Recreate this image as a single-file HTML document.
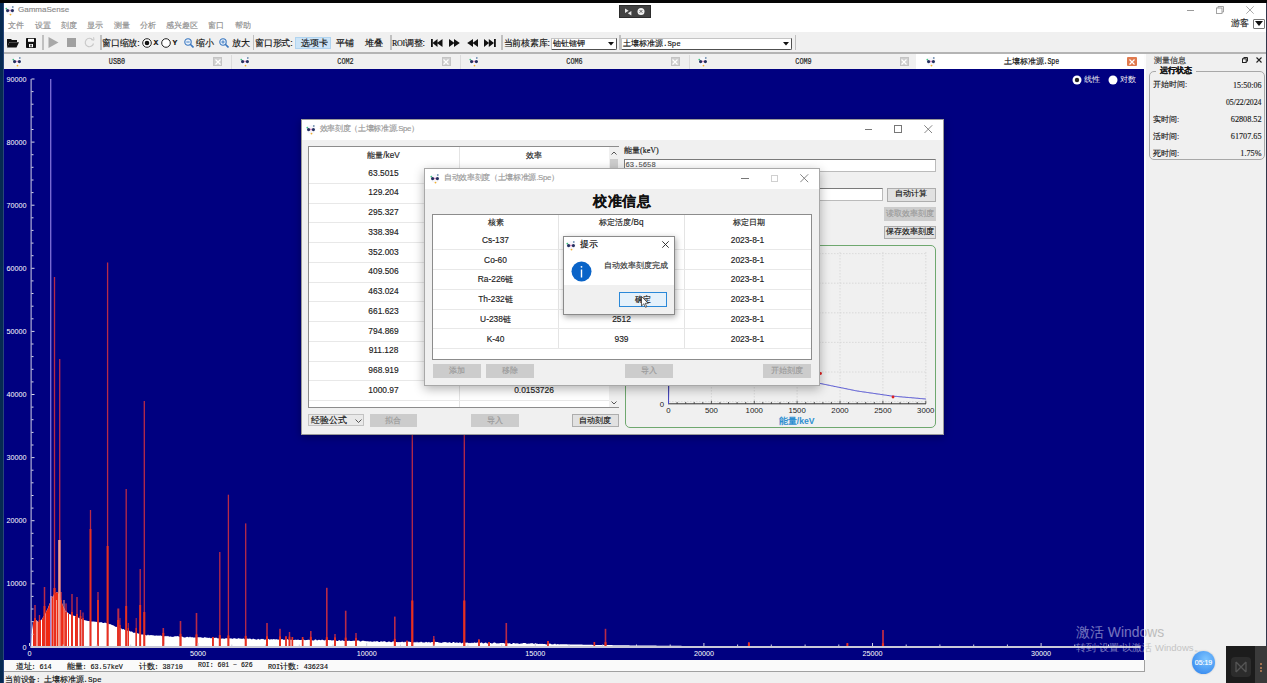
<!DOCTYPE html>
<html><head><meta charset="utf-8">
<style>
*{margin:0;padding:0;box-sizing:border-box}
html,body{width:1267px;height:683px;overflow:hidden;background:#f0f0f0;font-family:"Liberation Sans",sans-serif;color:#222;position:relative}
.a{position:absolute}
.t{position:absolute;white-space:nowrap;line-height:1;-webkit-text-stroke:0.15px currentColor}
.m{font-family:"Liberation Mono",monospace}
.s{font-family:"Liberation Serif",serif}
</style></head><body>
<div class="a" style="left:0;top:0;width:1267px;height:3px;background:#050505"></div>
<div class="a" style="left:3px;top:3px;width:1263px;height:29px;background:#fff"></div>
<div class="a" style="left:3px;top:32px;width:1263px;height:20px;background:#f0f0f0"></div>
<div class="a" style="left:3px;top:52px;width:1263px;height:2px;background:#b4b4b4"></div>
<div class="a" style="left:3px;top:54px;width:1142px;height:15px;background:#f0f0f0"></div>
<div class="a" style="left:3px;top:69px;width:1141px;height:591px;background:#000080"></div>
<div class="a" style="left:3px;top:660px;width:1142px;height:11px;background:#fafafa"></div>
<div class="a" style="left:1144px;top:660px;width:1px;height:12px;background:#a0a0a0"></div>
<div class="a" style="left:3px;top:671px;width:1142px;height:1px;background:#a0a0a0"></div>
<div class="a" style="left:1144px;top:54px;width:2px;height:606px;background:#fcfcfc"></div>
<div class="a" style="left:1146px;top:54px;width:120px;height:629px;background:#f0f0f0"></div>
<div class="a" style="left:0;top:3px;width:3px;height:680px;background:#062a52"></div><div class="a" style="left:3px;top:3px;width:1px;height:680px;background:#28467a"></div>
<div class="a" style="left:1266px;top:3px;width:1px;height:680px;background:#30364a"></div>
<svg class="a" style="left:5px;top:5px" width="10" height="11" viewBox="0 0 10 11"><circle cx="5" cy="5.5" r="4.6" fill="#f7f7fb"/><circle cx="1.3" cy="3.6" r="0.9" fill="#40c080"/><circle cx="7.8" cy="2" r="0.9" fill="#7090b0"/><circle cx="5" cy="5.5" r="1.1" fill="#e8a0d0"/><circle cx="2.6" cy="5.6" r="1.6" fill="#243060"/><circle cx="7.4" cy="5.6" r="1.6" fill="#243060"/><circle cx="5.5" cy="9.6" r="0.9" fill="#f0b030"/></svg>
<div class="t" style="left:18px;top:6px;font-size:8px;color:#8a8a8a">GammaSense</div>
<div class="t" style="left:8px;top:22px;font-size:8px;color:#8e8e8e;word-spacing:0">文件</div>
<div class="t" style="left:35px;top:22px;font-size:8px;color:#8e8e8e">设置</div>
<div class="t" style="left:60.5px;top:22px;font-size:8px;color:#8e8e8e">刻度</div>
<div class="t" style="left:87px;top:22px;font-size:8px;color:#8e8e8e">显示</div>
<div class="t" style="left:113.5px;top:22px;font-size:8px;color:#8e8e8e">测量</div>
<div class="t" style="left:140px;top:22px;font-size:8px;color:#8e8e8e">分析</div>
<div class="t" style="left:166px;top:22px;font-size:8px;color:#8e8e8e">感兴趣区</div>
<div class="t" style="left:208px;top:22px;font-size:8px;color:#8e8e8e">窗口</div>
<div class="t" style="left:234.5px;top:22px;font-size:8px;color:#8e8e8e">帮助</div>
<!-- recording pill -->
<div class="a" style="left:618.5px;top:5px;width:32px;height:13px;background:#424242;border:1px solid #2c2c2c"></div>
<svg class="a" style="left:624px;top:7px" width="24" height="10" viewBox="0 0 24 10"><path d="M1 1.5 L4.6 3.8 L1 6 Z" fill="#e8e8e8"/><path d="M7.4 4 L7.4 8.4 L3.8 6.2 Z" fill="#e8e8e8"/><circle cx="17" cy="4.4" r="3.5" fill="#f2f2f2"/><path d="M15.6 3 L18.4 5.8 M18.4 3 L15.6 5.8" stroke="#555" stroke-width="0.9"/></svg>
<!-- window controls -->
<div class="a" style="left:1187px;top:10px;width:7px;height:1px;background:#9a9a9a"></div>
<svg class="a" style="left:1215.5px;top:5.5px" width="8" height="8" viewBox="0 0 8 8"><rect x="0.5" y="2" width="5.5" height="5.5" fill="none" stroke="#9a9a9a" stroke-width="0.9"/><path d="M2 2 V0.5 H7.5 V6 H6" fill="none" stroke="#9a9a9a" stroke-width="0.9"/></svg>
<svg class="a" style="left:1246px;top:5.5px" width="8" height="8" viewBox="0 0 8 8"><path d="M0.3 0.3 L7.7 7.7 M7.7 0.3 L0.3 7.7" stroke="#a0a0a0" stroke-width="0.9"/></svg>
<div class="t" style="left:1231px;top:19px;font-size:9px;color:#222">游客</div>
<div class="a" style="left:1253px;top:19px;width:12px;height:9.5px;border:1px solid #777;background:#fff;border-radius:1px"></div>
<svg class="a" style="left:1255px;top:21.3px" width="8" height="5" viewBox="0 0 8 5"><path d="M0 0 H8 L4 5 Z" fill="#111"/></svg>
<!-- open folder -->
<svg class="a" style="left:7px;top:38px" width="12" height="10" viewBox="0 0 12 10"><path d="M0 1 H4 L5 2 H10 V4 H2.5 L0 9.5 Z" fill="#111"/><path d="M2.5 4.2 H12 L9.5 9.5 H0 Z" fill="#111"/></svg>
<!-- save -->
<svg class="a" style="left:25.5px;top:37.5px" width="10" height="10" viewBox="0 0 10 10"><rect x="0" y="0" width="10" height="10" rx="0.8" fill="#111"/><rect x="2" y="0.8" width="6" height="3" fill="#fff"/><rect x="3" y="6" width="4" height="3.2" fill="#fff"/><rect x="4.3" y="6.6" width="1.4" height="2" fill="#111"/></svg>
<div class="a" style="left:42px;top:35px;width:1.5px;height:15px;background:#c0c0c0"></div>
<!-- play -->
<svg class="a" style="left:48px;top:37px" width="11" height="11" viewBox="0 0 11 11"><path d="M0.5 0 L10.5 5.5 L0.5 11 Z" fill="#a8a8a8"/></svg>
<div class="a" style="left:67px;top:38px;width:9px;height:9px;background:#a0a0a0"></div>
<svg class="a" style="left:84px;top:37px" width="11" height="11" viewBox="0 0 11 11"><path d="M8.8 3 A4.2 4.2 0 1 0 9.5 6.5" fill="none" stroke="#c8c8c8" stroke-width="1.1"/><path d="M7 2.6 L10 3.2 L9.6 0.2" fill="none" stroke="#c8c8c8" stroke-width="1"/></svg>
<div class="a" style="left:100px;top:35px;width:1.5px;height:15px;background:#c0c0c0"></div>
<div class="t" style="left:102px;top:38.5px;font-size:8.6px;color:#111;letter-spacing:-0.2px">窗口缩放:</div>
<svg class="a" style="left:141.5px;top:38px" width="10" height="10" viewBox="0 0 10 10"><circle cx="5" cy="5" r="4.3" fill="#fff" stroke="#222" stroke-width="1"/><circle cx="5" cy="5" r="2.3" fill="#111"/></svg>
<div class="t m" style="left:153.5px;top:39px;font-size:8px;color:#111;font-weight:bold">X</div>
<svg class="a" style="left:160.5px;top:38px" width="10" height="10" viewBox="0 0 10 10"><circle cx="5" cy="5" r="4.3" fill="#fff" stroke="#222" stroke-width="1"/></svg>
<div class="t m" style="left:172.5px;top:39px;font-size:8px;color:#111;font-weight:bold">Y</div>
<svg class="a" style="left:184px;top:37.5px" width="10" height="10" viewBox="0 0 10 10"><circle cx="4" cy="4" r="3.2" fill="#e8f0fa" stroke="#3b78c0" stroke-width="1.1"/><path d="M6.3 6.3 L9.5 9.5" stroke="#3b78c0" stroke-width="1.6"/><path d="M2.3 4 H5.7" stroke="#3b78c0" stroke-width="0.9"/></svg>
<div class="t" style="left:196px;top:38.5px;font-size:8.5px;color:#111">缩小</div>
<svg class="a" style="left:218.5px;top:37.5px" width="10" height="10" viewBox="0 0 10 10"><circle cx="4" cy="4" r="3.2" fill="#e8f0fa" stroke="#3b78c0" stroke-width="1.1"/><path d="M6.3 6.3 L9.5 9.5" stroke="#3b78c0" stroke-width="1.6"/><path d="M2.3 4 H5.7 M4 2.3 V5.7" stroke="#3b78c0" stroke-width="0.9"/></svg>
<div class="t" style="left:231.5px;top:38.5px;font-size:8.5px;color:#111">放大</div>
<div class="a" style="left:252.5px;top:35px;width:1.5px;height:15px;background:#c0c0c0"></div>
<div class="t" style="left:255px;top:38.5px;font-size:8.6px;color:#111;letter-spacing:-0.2px">窗口形式:</div>
<div class="a" style="left:295px;top:37px;width:36px;height:12px;background:#cce4f7;border:1px solid #b0d4f0"></div>
<div class="t" style="left:300.5px;top:38.5px;font-size:8.5px;color:#111">选项卡</div>
<div class="t" style="left:336px;top:38.5px;font-size:8.5px;color:#111">平铺</div>
<div class="t" style="left:365px;top:38.5px;font-size:8.5px;color:#111">堆叠</div>
<div class="a" style="left:390px;top:35px;width:1.5px;height:15px;background:#c0c0c0"></div>
<div class="t" style="left:392px;top:38.5px;font-size:8.6px;color:#111;letter-spacing:-0.2px"><span class="s" style="font-size:8px;letter-spacing:-0.3px">ROI</span>调整:</div>
<svg class="a" style="left:430.5px;top:38.5px" width="12" height="8" viewBox="0 0 12 8"><rect x="0" y="0" width="1.8" height="8" fill="#111"/><path d="M1.5 4 L6.5 0 V8 Z M6 4 L11.5 0 V8 Z" fill="#111"/></svg>
<svg class="a" style="left:448.5px;top:38.5px" width="11" height="8" viewBox="0 0 11 8"><path d="M0 0 L5.5 4 L0 8 Z M5 0 L10.8 4 L5 8 Z" fill="#111"/></svg>
<svg class="a" style="left:466.5px;top:38.5px" width="11" height="8" viewBox="0 0 11 8"><path d="M11 0 L5.5 4 L11 8 Z M6 0 L0.2 4 L6 8 Z" fill="#111"/></svg>
<svg class="a" style="left:484px;top:38.5px" width="12" height="8" viewBox="0 0 12 8"><path d="M0 0 L5 4 L0 8 Z M4.8 0 L10 4 L4.8 8 Z" fill="#111"/><rect x="10" y="0" width="1.8" height="8" fill="#111"/></svg>
<div class="a" style="left:501px;top:35px;width:1.5px;height:15px;background:#c0c0c0"></div>
<div class="t" style="left:503.5px;top:38.5px;font-size:8.6px;color:#111;letter-spacing:-0.2px">当前核素库:</div>
<div class="a" style="left:551px;top:37.5px;width:65.5px;height:12px;background:#fff;border:1px solid #c4c4c4;border-bottom:1.5px solid #505050;border-right:1.5px solid #505050;border-radius:0 0 2px 0"></div>
<div class="t" style="left:553px;top:39px;font-size:8.4px;color:#111">铀钍镭钾</div>
<svg class="a" style="left:607.5px;top:42px" width="6" height="3.5" viewBox="0 0 6 3.5"><path d="M0 0 H6 L3 3.5 Z" fill="#111"/></svg>

<div class="a" style="left:619px;top:35px;width:1.5px;height:15px;background:#c0c0c0"></div>
<div class="a" style="left:621px;top:37.5px;width:171px;height:12px;background:#fff;border:1px solid #c4c4c4;border-bottom:1.5px solid #505050;border-right:1.5px solid #505050;border-radius:0 0 2px 0"></div>
<div class="t" style="left:623px;top:39px;font-size:8.4px;color:#111">土壤标准源<span class="m" style="font-size:7.4px">.Spe</span></div>
<svg class="a" style="left:782.5px;top:42px" width="6" height="3.5" viewBox="0 0 6 3.5"><path d="M0 0 H6 L3 3.5 Z" fill="#111"/></svg>

<div class="a" style="left:794.5px;top:35px;width:1.5px;height:15px;background:#c0c0c0"></div>
<svg class="a" style="left:11.5px;top:56px" width="10" height="11" viewBox="0 0 10 11"><circle cx="5" cy="5.5" r="4.6" fill="#f7f7fb"/><circle cx="1.3" cy="3.6" r="0.9" fill="#40c080"/><circle cx="7.8" cy="2" r="0.9" fill="#7090b0"/><circle cx="5" cy="5.5" r="1.1" fill="#e8a0d0"/><circle cx="2.6" cy="5.6" r="1.6" fill="#243060"/><circle cx="7.4" cy="5.6" r="1.6" fill="#243060"/><circle cx="5.5" cy="9.6" r="0.9" fill="#f0b030"/></svg>
<div class="t m" style="left:108px;top:59px;width:18px;text-align:center;font-size:6.8px;color:#222;transform:scaleY(1.2)">USB0</div>
<div class="a" style="left:213px;top:57px;width:9px;height:9px;background:#cfcfcf;border:1px solid #c4c4c4"></div>
<svg class="a" style="left:214.5px;top:58.5px" width="6" height="6" viewBox="0 0 6 6"><path d="M0.5 0.5 L5.5 5.5 M5.5 0.5 L0.5 5.5" stroke="#fff" stroke-width="1.2"/></svg>
<svg class="a" style="left:240.0px;top:56px" width="10" height="11" viewBox="0 0 10 11"><circle cx="5" cy="5.5" r="4.6" fill="#f7f7fb"/><circle cx="1.3" cy="3.6" r="0.9" fill="#40c080"/><circle cx="7.8" cy="2" r="0.9" fill="#7090b0"/><circle cx="5" cy="5.5" r="1.1" fill="#e8a0d0"/><circle cx="2.6" cy="5.6" r="1.6" fill="#243060"/><circle cx="7.4" cy="5.6" r="1.6" fill="#243060"/><circle cx="5.5" cy="9.6" r="0.9" fill="#f0b030"/></svg>
<div class="t m" style="left:336.5px;top:59px;width:18px;text-align:center;font-size:6.8px;color:#222;transform:scaleY(1.2)">COM2</div>
<div class="a" style="left:441.5px;top:57px;width:9px;height:9px;background:#cfcfcf;border:1px solid #c4c4c4"></div>
<svg class="a" style="left:443.0px;top:58.5px" width="6" height="6" viewBox="0 0 6 6"><path d="M0.5 0.5 L5.5 5.5 M5.5 0.5 L0.5 5.5" stroke="#fff" stroke-width="1.2"/></svg>
<div class="a" style="left:230.5px;top:55px;width:1px;height:14px;background:#dcdcdc"></div>
<svg class="a" style="left:469.0px;top:56px" width="10" height="11" viewBox="0 0 10 11"><circle cx="5" cy="5.5" r="4.6" fill="#f7f7fb"/><circle cx="1.3" cy="3.6" r="0.9" fill="#40c080"/><circle cx="7.8" cy="2" r="0.9" fill="#7090b0"/><circle cx="5" cy="5.5" r="1.1" fill="#e8a0d0"/><circle cx="2.6" cy="5.6" r="1.6" fill="#243060"/><circle cx="7.4" cy="5.6" r="1.6" fill="#243060"/><circle cx="5.5" cy="9.6" r="0.9" fill="#f0b030"/></svg>
<div class="t m" style="left:565.5px;top:59px;width:18px;text-align:center;font-size:6.8px;color:#222;transform:scaleY(1.2)">COM6</div>
<div class="a" style="left:670.5px;top:57px;width:9px;height:9px;background:#cfcfcf;border:1px solid #c4c4c4"></div>
<svg class="a" style="left:672.0px;top:58.5px" width="6" height="6" viewBox="0 0 6 6"><path d="M0.5 0.5 L5.5 5.5 M5.5 0.5 L0.5 5.5" stroke="#fff" stroke-width="1.2"/></svg>
<div class="a" style="left:459.5px;top:55px;width:1px;height:14px;background:#dcdcdc"></div>
<svg class="a" style="left:698.0px;top:56px" width="10" height="11" viewBox="0 0 10 11"><circle cx="5" cy="5.5" r="4.6" fill="#f7f7fb"/><circle cx="1.3" cy="3.6" r="0.9" fill="#40c080"/><circle cx="7.8" cy="2" r="0.9" fill="#7090b0"/><circle cx="5" cy="5.5" r="1.1" fill="#e8a0d0"/><circle cx="2.6" cy="5.6" r="1.6" fill="#243060"/><circle cx="7.4" cy="5.6" r="1.6" fill="#243060"/><circle cx="5.5" cy="9.6" r="0.9" fill="#f0b030"/></svg>
<div class="t m" style="left:794.5px;top:59px;width:18px;text-align:center;font-size:6.8px;color:#222;transform:scaleY(1.2)">COM9</div>
<div class="a" style="left:899.5px;top:57px;width:9px;height:9px;background:#cfcfcf;border:1px solid #c4c4c4"></div>
<svg class="a" style="left:901.0px;top:58.5px" width="6" height="6" viewBox="0 0 6 6"><path d="M0.5 0.5 L5.5 5.5 M5.5 0.5 L0.5 5.5" stroke="#fff" stroke-width="1.2"/></svg>
<div class="a" style="left:688.5px;top:55px;width:1px;height:14px;background:#dcdcdc"></div>
<div class="a" style="left:916px;top:54px;width:228px;height:15px;background:#fff"></div>
<svg class="a" style="left:925.5px;top:55.5px" width="10" height="11" viewBox="0 0 10 11"><circle cx="5" cy="5.5" r="4.6" fill="#f7f7fb"/><circle cx="1.3" cy="3.6" r="0.9" fill="#40c080"/><circle cx="7.8" cy="2" r="0.9" fill="#7090b0"/><circle cx="5" cy="5.5" r="1.1" fill="#e8a0d0"/><circle cx="2.6" cy="5.6" r="1.6" fill="#243060"/><circle cx="7.4" cy="5.6" r="1.6" fill="#243060"/><circle cx="5.5" cy="9.6" r="0.9" fill="#f0b030"/></svg>
<div class="t" style="left:1003.5px;top:57px;font-size:8.4px;color:#111">土壤标准源<span class="m" style="font-size:6.5px;display:inline-block;transform:scaleY(1.25)">.Spe</span></div>
<div class="a" style="left:1127px;top:56.5px;width:9.5px;height:9.5px;background:#e07a4e;border-radius:1px"></div>
<svg class="a" style="left:1129px;top:58.5px" width="6" height="6" viewBox="0 0 6 6"><path d="M0.5 0.5 L5.5 5.5 M5.5 0.5 L0.5 5.5" stroke="#fff" stroke-width="1.2"/></svg>
<svg class="a" style="left:0;top:0" width="1267" height="683" viewBox="0 0 1267 683">
<clipPath id="sc"><rect x="4" y="69" width="1140" height="591"/></clipPath><g clip-path="url(#sc)">
<path d="M31 647 L31.0 647.0 L32.0 630.0 L33.0 622.0 L34.0 621.3 L35.0 620.7 L36.0 620.0 L37.0 620.8 L38.0 621.7 L39.0 622.5 L40.0 621.3 L41.0 620.2 L42.0 619.0 L43.0 617.3 L44.0 615.7 L45.0 614.0 L46.0 612.0 L47.0 610.0 L48.0 608.0 L49.0 605.3 L50.0 602.7 L51.0 600.0 L52.0 598.0 L53.0 596.0 L54.0 594.0 L55.0 593.3 L56.0 592.7 L57.0 592.0 L58.0 593.0 L59.0 594.0 L60.0 597.0 L61.0 600.0 L62.0 603.0 L63.0 606.0 L64.0 608.0 L65.0 610.0 L66.0 611.0 L67.0 612.0 L68.0 613.0 L69.0 614.0 L70.0 614.3 L71.0 614.7 L72.0 615.0 L73.0 615.4 L74.0 615.8 L75.0 616.1 L76.0 616.5 L77.0 617.0 L78.0 617.5 L79.0 618.0 L80.0 618.5 L81.0 618.9 L82.0 619.2 L83.0 619.6 L84.0 620.0 L85.0 620.2 L86.0 620.5 L87.0 620.8 L88.0 621.0 L89.0 621.1 L90.0 621.2 L91.0 621.4 L92.0 621.5 L93.0 621.5 L94.0 621.6 L95.0 621.7 L96.0 621.7 L97.0 621.9 L98.0 622.1 L99.0 622.3 L100.0 622.5 L101.0 622.1 L102.0 622.4 L103.0 623.1 L104.0 622.9 L105.0 622.4 L106.0 622.9 L107.0 623.3 L108.0 623.3 L109.0 624.3 L110.0 623.9 L111.0 624.6 L112.0 625.0 L113.0 625.3 L114.0 625.8 L115.0 626.4 L116.0 627.1 L117.0 626.7 L118.0 627.6 L119.0 628.1 L120.0 628.1 L121.0 628.0 L122.0 629.5 L123.0 629.0 L124.0 629.3 L125.0 630.3 L126.0 630.2 L127.0 630.4 L128.0 631.1 L129.0 630.5 L130.0 631.6 L131.0 631.5 L132.0 631.5 L133.0 632.5 L134.0 633.0 L135.0 632.4 L136.0 633.1 L137.0 632.9 L138.0 633.6 L139.0 633.8 L140.0 633.4 L141.0 634.4 L142.0 634.4 L143.0 634.6 L144.0 635.0 L145.0 634.7 L146.0 635.3 L147.0 635.5 L148.0 634.6 L149.0 635.6 L150.0 635.1 L151.0 635.2 L152.0 634.9 L153.0 635.6 L154.0 635.2 L155.0 635.9 L156.0 635.3 L157.0 635.7 L158.0 635.5 L159.0 635.8 L160.0 635.4 L161.0 635.4 L162.0 636.2 L163.0 636.2 L164.0 636.0 L165.0 636.5 L166.0 635.7 L167.0 636.5 L168.0 635.8 L169.0 636.8 L170.0 636.4 L171.0 636.5 L172.0 636.9 L173.0 636.8 L174.0 636.8 L175.0 636.0 L176.0 636.4 L177.0 636.1 L178.0 636.3 L179.0 636.4 L180.0 637.2 L181.0 636.4 L182.0 636.6 L183.0 636.9 L184.0 637.4 L185.0 637.5 L186.0 637.3 L187.0 636.7 L188.0 637.1 L189.0 637.4 L190.0 636.6 L191.0 637.4 L192.0 637.1 L193.0 637.4 L194.0 637.5 L195.0 637.5 L196.0 637.4 L197.0 637.5 L198.0 637.1 L199.0 637.5 L200.0 637.1 L201.0 637.5 L202.0 637.6 L203.0 637.9 L204.0 637.5 L205.0 637.1 L206.0 637.7 L207.0 637.4 L208.0 638.1 L209.0 637.7 L210.0 637.7 L211.0 638.4 L212.0 637.8 L213.0 637.8 L214.0 637.8 L215.0 638.0 L216.0 637.5 L217.0 638.1 L218.0 638.6 L219.0 638.2 L220.0 638.5 L221.0 638.7 L222.0 638.6 L223.0 638.6 L224.0 638.7 L225.0 638.7 L226.0 638.1 L227.0 638.4 L228.0 638.2 L229.0 638.2 L230.0 638.6 L231.0 638.3 L232.0 638.7 L233.0 638.7 L234.0 638.1 L235.0 638.5 L236.0 638.5 L237.0 638.9 L238.0 638.2 L239.0 638.3 L240.0 638.7 L241.0 638.6 L242.0 639.0 L243.0 638.6 L244.0 638.5 L245.0 639.4 L246.0 638.6 L247.0 638.5 L248.0 638.7 L249.0 638.8 L250.0 638.6 L251.0 639.0 L252.0 639.5 L253.0 638.6 L254.0 639.0 L255.0 639.3 L256.0 639.6 L257.0 639.7 L258.0 638.7 L259.0 639.2 L260.0 639.7 L261.0 638.7 L262.0 639.3 L263.0 638.8 L264.0 639.6 L265.0 639.8 L266.0 639.3 L267.0 638.7 L268.0 638.8 L269.0 639.2 L270.0 639.8 L271.0 639.0 L272.0 639.6 L273.0 639.3 L274.0 639.1 L275.0 639.6 L276.0 639.2 L277.0 639.3 L278.0 639.8 L279.0 639.4 L280.0 639.8 L281.0 639.5 L282.0 639.1 L283.0 639.4 L284.0 640.0 L285.0 639.6 L286.0 640.1 L287.0 639.0 L288.0 639.4 L289.0 639.9 L290.0 639.8 L291.0 639.7 L292.0 639.8 L293.0 640.1 L294.0 639.9 L295.0 639.7 L296.0 639.8 L297.0 639.9 L298.0 639.5 L299.0 639.9 L300.0 639.9 L301.0 640.1 L302.0 639.7 L303.0 639.2 L304.0 639.8 L305.0 640.2 L306.0 640.0 L307.0 640.0 L308.0 639.7 L309.0 639.7 L310.0 640.1 L311.0 639.4 L312.0 640.3 L313.0 640.4 L314.0 640.5 L315.0 639.5 L316.0 639.5 L317.0 640.4 L318.0 639.9 L319.0 639.7 L320.0 639.9 L321.0 640.2 L322.0 639.6 L323.0 640.1 L324.0 640.3 L325.0 640.4 L326.0 639.6 L327.0 640.5 L328.0 640.1 L329.0 640.1 L330.0 640.3 L331.0 640.0 L332.0 640.8 L333.0 640.0 L334.0 640.4 L335.0 640.0 L336.0 640.5 L337.0 640.9 L338.0 640.9 L339.0 640.0 L340.0 640.6 L341.0 641.0 L342.0 640.2 L343.0 640.5 L344.0 640.9 L345.0 640.9 L346.0 640.6 L347.0 640.8 L348.0 640.9 L349.0 640.5 L350.0 640.9 L351.0 640.9 L352.0 641.0 L353.0 640.8 L354.0 640.7 L355.0 640.8 L356.0 641.4 L357.0 640.6 L358.0 640.5 L359.0 640.4 L360.0 641.4 L361.0 641.6 L362.0 640.7 L363.0 640.8 L364.0 640.7 L365.0 641.2 L366.0 641.1 L367.0 641.6 L368.0 640.9 L369.0 641.7 L370.0 641.2 L371.0 641.6 L372.0 641.7 L373.0 641.8 L374.0 641.3 L375.0 641.5 L376.0 641.5 L377.0 641.1 L378.0 641.5 L379.0 642.0 L380.0 642.0 L381.0 641.0 L382.0 641.7 L383.0 641.4 L384.0 641.2 L385.0 641.2 L386.0 642.0 L387.0 642.2 L388.0 641.7 L389.0 641.6 L390.0 641.8 L391.0 642.2 L392.0 642.1 L393.0 641.3 L394.0 641.5 L395.0 642.3 L396.0 641.9 L397.0 642.1 L398.0 642.3 L399.0 642.1 L400.0 642.3 L401.0 642.1 L402.0 641.7 L403.0 641.7 L404.0 642.6 L405.0 641.5 L406.0 642.3 L407.0 642.5 L408.0 641.8 L409.0 641.5 L410.0 642.0 L411.0 641.9 L412.0 642.1 L413.0 642.0 L414.0 642.7 L415.0 641.7 L416.0 642.7 L417.0 641.6 L418.0 642.7 L419.0 642.0 L420.0 642.5 L421.0 641.6 L422.0 642.2 L423.0 642.4 L424.0 642.4 L425.0 642.6 L426.0 641.8 L427.0 642.2 L428.0 642.4 L429.0 641.7 L430.0 642.7 L431.0 642.2 L432.0 642.0 L433.0 642.0 L434.0 642.5 L435.0 641.8 L436.0 642.1 L437.0 642.1 L438.0 642.1 L439.0 642.7 L440.0 642.5 L441.0 642.9 L442.0 642.7 L443.0 642.2 L444.0 642.2 L445.0 642.0 L446.0 642.2 L447.0 642.6 L448.0 642.8 L449.0 642.2 L450.0 642.3 L451.0 642.9 L452.0 643.1 L453.0 642.0 L454.0 642.0 L455.0 642.9 L456.0 642.6 L457.0 642.5 L458.0 642.8 L459.0 642.9 L460.0 642.1 L461.0 643.2 L462.0 643.2 L463.0 642.6 L464.0 642.7 L465.0 642.4 L466.0 642.8 L467.0 642.4 L468.0 642.8 L469.0 643.3 L470.0 642.8 L471.0 643.2 L472.0 642.4 L473.0 643.3 L474.0 642.4 L475.0 642.5 L476.0 643.1 L477.0 642.6 L478.0 642.4 L479.0 642.4 L480.0 643.3 L481.0 642.4 L482.0 642.4 L483.0 643.5 L484.0 643.3 L485.0 642.8 L486.0 642.6 L487.0 643.5 L488.0 643.4 L489.0 643.2 L490.0 643.1 L491.0 643.1 L492.0 643.7 L493.0 643.1 L494.0 642.6 L495.0 642.6 L496.0 643.3 L497.0 643.4 L498.0 643.3 L499.0 643.5 L500.0 643.0 L501.0 643.1 L502.0 643.0 L503.0 643.1 L504.0 643.0 L505.0 643.7 L506.0 642.9 L507.0 643.0 L508.0 643.6 L509.0 643.2 L510.0 643.2 L511.0 643.9 L512.0 643.9 L513.0 643.1 L514.0 643.0 L515.0 643.4 L516.0 643.5 L517.0 643.3 L518.0 643.6 L519.0 643.7 L520.0 643.9 L521.0 643.2 L522.0 643.7 L523.0 643.0 L524.0 643.1 L525.0 643.1 L526.0 643.2 L527.0 644.0 L528.0 643.5 L529.0 643.7 L530.0 643.6 L531.0 643.3 L532.0 643.2 L533.0 643.3 L534.0 644.2 L535.0 643.6 L536.0 643.7 L537.0 643.5 L538.0 644.1 L539.0 644.1 L540.0 643.7 L541.0 643.9 L542.0 643.7 L543.0 644.0 L544.0 644.0 L545.0 644.0 L546.0 644.4 L547.0 644.5 L548.0 643.4 L549.0 643.8 L550.0 643.4 L551.0 643.9 L552.0 644.4 L553.0 644.3 L554.0 644.2 L555.0 643.6 L556.0 644.5 L557.0 644.3 L558.0 643.9 L559.0 644.5 L560.0 644.2 L561.0 644.2 L562.0 644.2 L563.0 644.3 L564.0 644.3 L565.0 644.3 L566.0 644.3 L567.0 644.3 L568.0 644.4 L569.0 644.4 L570.0 644.4 L571.0 644.4 L572.0 644.4 L573.0 644.5 L574.0 644.5 L575.0 644.5 L576.0 644.5 L577.0 644.5 L578.0 644.6 L579.0 644.6 L580.0 644.6 L581.0 644.6 L582.0 644.6 L583.0 644.7 L584.0 644.7 L585.0 644.7 L586.0 644.7 L587.0 644.7 L588.0 644.8 L589.0 644.8 L590.0 644.8 L591.0 644.8 L592.0 644.8 L593.0 644.9 L594.0 644.9 L595.0 644.9 L596.0 644.9 L597.0 644.9 L598.0 645.0 L599.0 645.0 L600.0 645.0 L601.0 645.0 L602.0 645.0 L603.0 645.0 L604.0 645.0 L605.0 645.1 L606.0 645.1 L607.0 645.1 L608.0 645.1 L609.0 645.1 L610.0 645.1 L611.0 645.1 L612.0 645.1 L613.0 645.2 L614.0 645.2 L615.0 645.2 L616.0 645.2 L617.0 645.2 L618.0 645.2 L619.0 645.2 L620.0 645.2 L621.0 645.3 L622.0 645.3 L623.0 645.3 L624.0 645.3 L625.0 645.3 L626.0 645.3 L627.0 645.3 L628.0 645.3 L629.0 645.3 L630.0 645.4 L631.0 645.4 L632.0 645.4 L633.0 645.4 L634.0 645.4 L635.0 645.4 L636.0 645.4 L637.0 645.4 L638.0 645.5 L639.0 645.5 L640.0 645.5 L641.0 645.5 L642.0 645.5 L643.0 645.5 L644.0 645.5 L645.0 645.5 L646.0 645.6 L647.0 645.6 L648.0 645.6 L649.0 645.6 L650.0 645.6 L651.0 645.6 L652.0 645.6 L653.0 645.6 L654.0 645.6 L655.0 645.6 L656.0 645.6 L657.0 645.7 L658.0 645.7 L659.0 645.7 L660.0 645.7 L661.0 645.7 L662.0 645.7 L663.0 645.7 L664.0 645.7 L665.0 645.7 L666.0 645.7 L667.0 645.7 L668.0 645.7 L669.0 645.8 L670.0 645.8 L671.0 645.8 L672.0 645.8 L673.0 645.8 L674.0 645.8 L675.0 645.8 L676.0 645.8 L677.0 645.8 L678.0 645.8 L679.0 645.8 L680.0 645.8 L681.0 645.8 L682.0 645.9 L683.0 645.9 L684.0 645.9 L685.0 645.9 L686.0 645.9 L687.0 645.9 L688.0 645.9 L689.0 645.9 L690.0 645.9 L691.0 645.9 L692.0 645.9 L693.0 645.9 L694.0 646.0 L695.0 646.0 L696.0 646.0 L697.0 646.0 L698.0 646.0 L699.0 646.0 L700.0 646.0 L701.0 646.0 L702.0 646.0 L703.0 646.0 L704.0 646.0 L705.0 646.0 L706.0 646.0 L707.0 646.0 L708.0 646.0 L709.0 646.0 L710.0 646.0 L711.0 646.0 L712.0 646.0 L713.0 646.0 L714.0 646.0 L715.0 646.0 L716.0 646.0 L717.0 646.0 L718.0 646.0 L719.0 646.0 L720.0 646.0 L721.0 646.0 L722.0 646.0 L723.0 646.0 L724.0 646.0 L725.0 646.0 L726.0 646.1 L727.0 646.1 L728.0 646.1 L729.0 646.1 L730.0 646.1 L731.0 646.1 L732.0 646.1 L733.0 646.1 L734.0 646.1 L735.0 646.1 L736.0 646.1 L737.0 646.1 L738.0 646.1 L739.0 646.1 L740.0 646.1 L741.0 646.1 L742.0 646.1 L743.0 646.1 L744.0 646.1 L745.0 646.1 L746.0 646.1 L747.0 646.1 L748.0 646.1 L749.0 646.1 L750.0 646.1 L751.0 646.1 L752.0 646.1 L753.0 646.1 L754.0 646.1 L755.0 646.1 L756.0 646.1 L757.0 646.1 L758.0 646.1 L759.0 646.1 L760.0 646.1 L761.0 646.1 L762.0 646.1 L763.0 646.1 L764.0 646.1 L765.0 646.1 L766.0 646.1 L767.0 646.1 L768.0 646.1 L769.0 646.1 L770.0 646.1 L771.0 646.1 L772.0 646.1 L773.0 646.1 L774.0 646.1 L775.0 646.2 L776.0 646.2 L777.0 646.2 L778.0 646.2 L779.0 646.2 L780.0 646.2 L781.0 646.2 L782.0 646.2 L783.0 646.2 L784.0 646.2 L785.0 646.2 L786.0 646.2 L787.0 646.2 L788.0 646.2 L789.0 646.2 L790.0 646.2 L791.0 646.2 L792.0 646.2 L793.0 646.2 L794.0 646.2 L795.0 646.2 L796.0 646.2 L797.0 646.2 L798.0 646.2 L799.0 646.2 L800.0 646.2 L801.0 646.2 L802.0 646.2 L803.0 646.2 L804.0 646.2 L805.0 646.2 L806.0 646.2 L807.0 646.2 L808.0 646.2 L809.0 646.2 L810.0 646.2 L811.0 646.2 L812.0 646.2 L813.0 646.2 L814.0 646.2 L815.0 646.2 L816.0 646.2 L817.0 646.2 L818.0 646.2 L819.0 646.2 L820.0 646.2 L821.0 646.2 L822.0 646.2 L823.0 646.2 L824.0 646.2 L825.0 646.2 L826.0 646.2 L827.0 646.2 L828.0 646.2 L829.0 646.2 L830.0 646.2 L831.0 646.2 L832.0 646.2 L833.0 646.2 L834.0 646.2 L835.0 646.2 L836.0 646.2 L837.0 646.2 L838.0 646.2 L839.0 646.2 L840.0 646.2 L841.0 646.2 L842.0 646.2 L843.0 646.2 L844.0 646.2 L845.0 646.2 L846.0 646.2 L847.0 646.2 L848.0 646.2 L849.0 646.2 L850.0 646.2 L851.0 646.3 L852.0 646.3 L853.0 646.3 L854.0 646.3 L855.0 646.3 L856.0 646.3 L857.0 646.3 L858.0 646.3 L859.0 646.3 L860.0 646.3 L861.0 646.3 L862.0 646.3 L863.0 646.3 L864.0 646.3 L865.0 646.3 L866.0 646.3 L867.0 646.3 L868.0 646.3 L869.0 646.3 L870.0 646.3 L871.0 646.3 L872.0 646.3 L873.0 646.3 L874.0 646.3 L875.0 646.3 L876.0 646.3 L877.0 646.3 L878.0 646.3 L879.0 646.3 L880.0 646.3 L881.0 646.3 L882.0 646.3 L883.0 646.3 L884.0 646.3 L885.0 646.3 L886.0 646.3 L887.0 646.3 L888.0 646.3 L889.0 646.3 L890.0 646.3 L891.0 646.3 L892.0 646.3 L893.0 646.3 L894.0 646.3 L895.0 646.3 L896.0 646.3 L897.0 646.3 L898.0 646.3 L899.0 646.3 L900.0 646.3 L901.0 646.3 L902.0 646.3 L903.0 646.3 L904.0 646.3 L905.0 646.3 L906.0 646.3 L907.0 646.3 L908.0 646.3 L909.0 646.3 L910.0 646.3 L911.0 646.3 L912.0 646.3 L913.0 646.3 L914.0 646.3 L915.0 646.3 L916.0 646.3 L917.0 646.3 L918.0 646.3 L919.0 646.3 L920.0 646.3 L921.0 646.3 L922.0 646.3 L923.0 646.3 L924.0 646.3 L925.0 646.3 L926.0 646.3 L927.0 646.3 L928.0 646.3 L929.0 646.3 L930.0 646.3 L931.0 646.3 L932.0 646.3 L933.0 646.3 L934.0 646.3 L935.0 646.3 L936.0 646.3 L937.0 646.3 L938.0 646.3 L939.0 646.3 L940.0 646.3 L941.0 646.3 L942.0 646.3 L943.0 646.3 L944.0 646.3 L945.0 646.3 L946.0 646.3 L947.0 646.3 L948.0 646.3 L949.0 646.3 L950.0 646.4 L951.0 646.4 L952.0 646.4 L953.0 646.4 L954.0 646.4 L955.0 646.4 L956.0 646.4 L957.0 646.4 L958.0 646.4 L959.0 646.4 L960.0 646.4 L961.0 646.4 L962.0 646.4 L963.0 646.4 L964.0 646.4 L965.0 646.4 L966.0 646.4 L967.0 646.4 L968.0 646.4 L969.0 646.4 L970.0 646.4 L971.0 646.4 L972.0 646.4 L973.0 646.4 L974.0 646.4 L975.0 646.4 L976.0 646.4 L977.0 646.4 L978.0 646.4 L979.0 646.4 L980.0 646.4 L981.0 646.4 L982.0 646.4 L983.0 646.4 L984.0 646.4 L985.0 646.4 L986.0 646.4 L987.0 646.4 L988.0 646.4 L989.0 646.4 L990.0 646.4 L991.0 646.4 L992.0 646.4 L993.0 646.4 L994.0 646.4 L995.0 646.4 L996.0 646.4 L997.0 646.4 L998.0 646.4 L999.0 646.4 L1000.0 646.4 L1001.0 646.4 L1002.0 646.4 L1003.0 646.4 L1004.0 646.4 L1005.0 646.4 L1006.0 646.4 L1007.0 646.4 L1008.0 646.4 L1009.0 646.4 L1010.0 646.4 L1011.0 646.4 L1012.0 646.4 L1013.0 646.4 L1014.0 646.4 L1015.0 646.4 L1016.0 646.4 L1017.0 646.4 L1018.0 646.4 L1019.0 646.4 L1020.0 646.4 L1021.0 646.4 L1022.0 646.4 L1023.0 646.4 L1024.0 646.4 L1025.0 646.4 L1026.0 646.4 L1027.0 646.4 L1028.0 646.4 L1029.0 646.4 L1030.0 646.4 L1031.0 646.4 L1032.0 646.4 L1033.0 646.4 L1034.0 646.4 L1035.0 646.4 L1036.0 646.4 L1037.0 646.4 L1038.0 646.4 L1039.0 646.4 L1040.0 646.4 L1041.0 646.4 L1042.0 646.4 L1043.0 646.4 L1044.0 646.4 L1045.0 646.4 L1046.0 646.4 L1047.0 646.4 L1048.0 646.4 L1049.0 646.4 L1050.0 646.4 L1051.0 646.4 L1052.0 646.4 L1053.0 646.4 L1054.0 646.4 L1055.0 646.4 L1056.0 646.4 L1057.0 646.4 L1058.0 646.4 L1059.0 646.4 L1060.0 646.4 L1061.0 646.4 L1062.0 646.4 L1063.0 646.4 L1064.0 646.4 L1065.0 646.4 L1066.0 646.4 L1067.0 646.4 L1068.0 646.4 L1069.0 646.4 L1070.0 646.5 L1071.0 646.5 L1072.0 646.5 L1073.0 646.5 L1074.0 646.5 L1075.0 646.5 L1076.0 646.5 L1077.0 646.5 L1078.0 646.5 L1079.0 646.5 L1080.0 646.5 L1081.0 646.5 L1082.0 646.5 L1083.0 646.5 L1084.0 646.5 L1085.0 646.5 L1086.0 646.5 L1087.0 646.5 L1088.0 646.5 L1089.0 646.5 L1090.0 646.5 L1091.0 646.5 L1092.0 646.5 L1093.0 646.5 L1094.0 646.5 L1095.0 646.5 L1096.0 646.5 L1097.0 646.5 L1098.0 646.5 L1099.0 646.5 L1100.0 646.5 L1101.0 646.5 L1102.0 646.5 L1103.0 646.5 L1104.0 646.5 L1105.0 646.5 L1106.0 646.5 L1107.0 646.5 L1108.0 646.5 L1109.0 646.5 L1110.0 646.5 L1111.0 646.5 L1112.0 646.5 L1113.0 646.5 L1114.0 646.5 L1115.0 646.5 L1116.0 646.5 L1117.0 646.5 L1118.0 646.5 L1119.0 646.5 L1120.0 646.5 L1121.0 646.5 L1122.0 646.5 L1123.0 646.5 L1124.0 646.5 L1125.0 646.5 L1126.0 646.5 L1127.0 646.5 L1128.0 646.5 L1129.0 646.5 L1130.0 646.5 L1131.0 646.5 L1132.0 646.5 L1133.0 646.5 L1134.0 646.5 L1135.0 646.5 L1136.0 646.5 L1137.0 646.5 L1138.0 646.5 L1139.0 646.5 L1140.0 646.5 L1140.0 647.0 L1140 648 L31 648 Z" fill="#fff"/>
<path d="M33.0 647 L33.0 622.0 L33.5 621.7 L34.0 621.3 L34.5 621.0 L35.0 620.7 L35.5 620.3 L36.0 620.0 L36.5 620.4 L36.5 647 Z" fill="#f02812"/>
<path d="M37.5 647 L37.5 621.2 L38.0 621.7 L38.5 622.1 L39.0 622.5 L39.5 621.9 L40.0 621.3 L40.5 620.8 L41.0 620.2 L41.0 647 Z" fill="#f02812"/>
<path d="M42.0 647 L42.0 619.0 L42.5 618.2 L43.0 617.3 L43.5 616.5 L44.0 615.7 L44.5 614.8 L45.0 614.0 L45.0 647 Z" fill="#f02812"/>
<path d="M46.0 647 L46.0 612.0 L46.5 611.0 L47.0 610.0 L47.5 609.0 L48.0 608.0 L48.5 606.7 L49.0 605.3 L49.5 604.0 L50.0 602.7 L50.5 601.3 L51.0 600.0 L51.5 599.0 L52.0 598.0 L52.5 597.0 L53.0 596.0 L53.0 647 Z" fill="#f02812"/>
<path d="M54.5 647 L54.5 593.7 L55.0 593.3 L55.5 593.0 L56.0 592.7 L56.5 592.3 L57.0 592.0 L57.5 592.5 L58.0 593.0 L58.0 647 Z" fill="#f02812"/>
<path d="M60.5 647 L60.5 598.5 L61.0 600.0 L61.5 601.5 L62.0 603.0 L62.5 604.5 L63.0 606.0 L63.5 607.0 L64.0 608.0 L64.5 609.0 L65.0 610.0 L65.0 647 Z" fill="#f02812"/>
<path d="M68.0 647 L68.0 613.0 L68.5 613.5 L69.0 614.0 L69.0 647 Z" fill="#f02812"/>
<path d="M71.0 647 L71.0 614.7 L71.5 614.8 L72.0 615.0 L72.5 615.2 L72.5 647 Z" fill="#f02812"/>
<path d="M75.0 647 L75.0 616.1 L75.5 616.3 L76.0 616.5 L76.5 616.8 L76.5 647 Z" fill="#f02812"/>
<rect x="34.25" y="605" width="1.5" height="42" fill="#b82a48"/>
<rect x="34.05" y="618" width="1.9" height="29" fill="#e83020"/>
<rect x="38.85" y="615" width="1.3" height="32" fill="#b82a48"/>
<rect x="38.65" y="620" width="1.7000000000000002" height="27" fill="#e83020"/>
<rect x="43.75" y="587" width="1.5" height="60" fill="#b82a48"/>
<rect x="43.55" y="606" width="1.9" height="41" fill="#e83020"/>
<rect x="53.85" y="277" width="1.3" height="370" fill="#b82a48"/>
<rect x="53.40" y="588" width="2.2" height="59" fill="#e83020"/>
<rect x="59.05" y="359" width="1.3" height="288" fill="#b82a48"/>
<rect x="58.70" y="592" width="2.0" height="55" fill="#e83020"/>
<rect x="60.60" y="592" width="1.2" height="55" fill="#b82a48"/>
<rect x="60.40" y="600" width="1.6" height="47" fill="#e83020"/>
<rect x="65.30" y="603.4" width="1.4" height="43.60000000000002" fill="#b82a48"/>
<rect x="65.10" y="612" width="1.7999999999999998" height="35" fill="#e83020"/>
<rect x="71.30" y="594" width="1.4" height="53" fill="#b82a48"/>
<rect x="71.10" y="612" width="1.7999999999999998" height="35" fill="#e83020"/>
<rect x="76.30" y="597" width="1.4" height="50" fill="#b82a48"/>
<rect x="76.10" y="614" width="1.7999999999999998" height="33" fill="#e83020"/>
<rect x="79.80" y="610" width="1.4" height="37" fill="#b82a48"/>
<rect x="79.60" y="616" width="1.7999999999999998" height="31" fill="#e83020"/>
<rect x="82.40" y="612.5" width="1.2" height="34.5" fill="#b82a48"/>
<rect x="82.20" y="618" width="1.6" height="29" fill="#e83020"/>
<rect x="89.85" y="510" width="1.3" height="137" fill="#b82a48"/>
<rect x="89.55" y="529" width="1.9" height="118" fill="#e83020"/>
<rect x="97.35" y="592" width="1.3" height="55" fill="#b82a48"/>
<rect x="97.15" y="600" width="1.7000000000000002" height="47" fill="#e83020"/>
<rect x="106.95" y="262.5" width="1.3" height="384.5" fill="#b82a48"/>
<rect x="106.60" y="546" width="2.0" height="101" fill="#e83020"/>
<rect x="117.30" y="608.5" width="2" height="38.5" fill="#b82a48"/>
<rect x="117.10" y="620" width="2.4" height="27" fill="#e83020"/>
<rect x="119.50" y="618" width="1" height="29" fill="#b82a48"/>
<rect x="119.30" y="625" width="1.4" height="22" fill="#e83020"/>
<rect x="125.55" y="489" width="1.3" height="158" fill="#b82a48"/>
<rect x="125.25" y="606" width="1.9" height="41" fill="#e83020"/>
<rect x="127.80" y="623" width="1" height="24" fill="#b82a48"/>
<rect x="127.60" y="628" width="1.4" height="19" fill="#e83020"/>
<rect x="135.70" y="618" width="1" height="29" fill="#b82a48"/>
<rect x="135.50" y="628" width="1.4" height="19" fill="#e83020"/>
<rect x="139.55" y="569" width="1.3" height="78" fill="#b82a48"/>
<rect x="139.25" y="605" width="1.9" height="42" fill="#e83020"/>
<rect x="143.65" y="401" width="1.3" height="246" fill="#b82a48"/>
<rect x="143.30" y="612" width="2.0" height="35" fill="#e83020"/>
<rect x="162.50" y="628" width="1.6" height="19" fill="#b82a48"/>
<rect x="162.30" y="632.9252380952381" width="2.0" height="14.074761904761885" fill="#e83020"/>
<rect x="179.70" y="621" width="1.6" height="26" fill="#b82a48"/>
<rect x="179.50" y="633.8175" width="2.0" height="13.182500000000005" fill="#e83020"/>
<rect x="195.70" y="613" width="1.6" height="34" fill="#b82a48"/>
<rect x="195.50" y="634.3774999999999" width="2.0" height="12.62250000000006" fill="#e83020"/>
<rect x="212.20" y="637" width="1.4" height="10" fill="#b82a48"/>
<rect x="212.00" y="637" width="1.7999999999999998" height="10" fill="#e83020"/>
<rect x="219.15" y="552" width="1.3" height="95" fill="#b82a48"/>
<rect x="218.80" y="635.16" width="2.0" height="11.840000000000032" fill="#e83020"/>
<rect x="227.75" y="494.7" width="1.3" height="152.3" fill="#b82a48"/>
<rect x="227.40" y="635.4466666666667" width="2.0" height="11.553333333333285" fill="#e83020"/>
<rect x="245.05" y="523.4" width="1.3" height="123.60000000000002" fill="#b82a48"/>
<rect x="244.70" y="635.8663333333334" width="2.0" height="11.133666666666613" fill="#e83020"/>
<rect x="266.20" y="623" width="1.6" height="24" fill="#b82a48"/>
<rect x="266.00" y="636.2933333333334" width="2.0" height="10.706666666666592" fill="#e83020"/>
<rect x="279.20" y="628.8" width="1.6" height="18.200000000000045" fill="#b82a48"/>
<rect x="279.00" y="636.4666666666667" width="2.0" height="10.533333333333303" fill="#e83020"/>
<rect x="285.40" y="636" width="1.2" height="11" fill="#b82a48"/>
<rect x="285.20" y="636.5466666666667" width="1.6" height="10.453333333333262" fill="#e83020"/>
<rect x="288.80" y="632" width="1.4" height="15" fill="#b82a48"/>
<rect x="288.60" y="636.5933333333334" width="1.7999999999999998" height="10.406666666666638" fill="#e83020"/>
<rect x="291.80" y="637" width="1.2" height="10" fill="#b82a48"/>
<rect x="291.60" y="637" width="1.6" height="10" fill="#e83020"/>
<rect x="302.00" y="637" width="1.2" height="10" fill="#b82a48"/>
<rect x="301.80" y="637" width="1.6" height="10" fill="#e83020"/>
<rect x="310.00" y="631" width="1.6" height="16" fill="#b82a48"/>
<rect x="309.80" y="636.8773333333334" width="2.0" height="10.122666666666646" fill="#e83020"/>
<rect x="326.00" y="587.8" width="1.6" height="59.200000000000045" fill="#b82a48"/>
<rect x="325.80" y="637.17" width="2.0" height="9.830000000000041" fill="#e83020"/>
<rect x="334.30" y="634" width="1.4" height="13" fill="#b82a48"/>
<rect x="334.10" y="637.375" width="1.7999999999999998" height="9.625" fill="#e83020"/>
<rect x="344.90" y="610.7" width="1.6" height="36.299999999999955" fill="#b82a48"/>
<rect x="344.70" y="637.6425" width="2.0" height="9.357499999999959" fill="#e83020"/>
<rect x="355.30" y="633" width="1.4" height="14" fill="#b82a48"/>
<rect x="355.10" y="637.9" width="1.7999999999999998" height="9.100000000000023" fill="#e83020"/>
<rect x="394.00" y="616.6" width="1.6" height="30.399999999999977" fill="#b82a48"/>
<rect x="393.80" y="638.87" width="2.0" height="8.129999999999995" fill="#e83020"/>
<rect x="406.40" y="640.7" width="1.2" height="6.2999999999999545" fill="#b82a48"/>
<rect x="406.20" y="640.7" width="1.6" height="6.2999999999999545" fill="#e83020"/>
<rect x="411.65" y="140" width="1.3" height="507" fill="#b82a48"/>
<rect x="411.20" y="600.5" width="2.2" height="46.5" fill="#e83020"/>
<rect x="433.10" y="636" width="1.4" height="11" fill="#b82a48"/>
<rect x="432.90" y="639.338" width="1.7999999999999998" height="7.662000000000035" fill="#e83020"/>
<rect x="463.65" y="140" width="1.3" height="507" fill="#b82a48"/>
<rect x="463.20" y="600.5" width="2.2" height="46.5" fill="#e83020"/>
<rect x="478.20" y="639" width="1.4" height="8" fill="#b82a48"/>
<rect x="478.00" y="639.9046000000001" width="1.7999999999999998" height="7.095399999999927" fill="#e83020"/>
<rect x="488.40" y="642" width="1.2" height="5" fill="#b82a48"/>
<rect x="488.20" y="642" width="1.6" height="5" fill="#e83020"/>
<rect x="505.50" y="623" width="1.6" height="24" fill="#b82a48"/>
<rect x="505.30" y="640.3008000000001" width="2.0" height="6.699199999999905" fill="#e83020"/>
<rect x="547.40" y="641" width="1.2" height="6" fill="#b82a48"/>
<rect x="547.20" y="641" width="1.6" height="6" fill="#e83020"/>
<rect x="593.80" y="642" width="1.2" height="5" fill="#b82a48"/>
<rect x="593.60" y="642" width="1.6" height="5" fill="#e83020"/>
<rect x="604.70" y="628.8" width="1.6" height="18.200000000000045" fill="#b82a48"/>
<rect x="604.50" y="642.066" width="2.0" height="4.933999999999969" fill="#e83020"/>
<rect x="748.10" y="642" width="1.6" height="5" fill="#b82a48"/>
<rect x="747.90" y="643.0978" width="2.0" height="3.9021999999999935" fill="#e83020"/>
<rect x="846.70" y="643" width="1.4" height="4" fill="#b82a48"/>
<rect x="846.50" y="643.2474000000001" width="1.7999999999999998" height="3.752599999999916" fill="#e83020"/>
<rect x="882.10" y="630" width="1.8" height="17" fill="#b82a48"/>
<rect x="881.90" y="643.283" width="2.2" height="3.7169999999999845" fill="#e83020"/>
<rect x="50" y="596" width="1.7999999999999972" height="51" fill="#f4a090"/>
<rect x="58.2" y="540" width="2.3999999999999986" height="107" fill="#f4a090"/>
<rect x="56" y="600" width="1" height="47" fill="#f4a090"/>
<rect x="63.5" y="600" width="1.0" height="47" fill="#f4a090"/>
<rect x="50.2" y="79" width="1.1" height="568" fill="#9484e8"/>
</g>
<rect x="30.6" y="79" width="1" height="569" fill="#d0d0e4"/>
<rect x="30.5" y="646" width="1110" height="2" fill="#c8c8d8"/>
<rect x="31.5" y="78.5" width="3" height="1" fill="#d8d8e8"/>
<rect x="31.5" y="91.1" width="2" height="1" fill="#d8d8e8"/>
<rect x="31.5" y="103.7" width="2" height="1" fill="#d8d8e8"/>
<rect x="31.5" y="116.4" width="2" height="1" fill="#d8d8e8"/>
<rect x="31.5" y="129.0" width="2" height="1" fill="#d8d8e8"/>
<rect x="31.5" y="141.6" width="3" height="1" fill="#d8d8e8"/>
<rect x="31.5" y="154.2" width="2" height="1" fill="#d8d8e8"/>
<rect x="31.5" y="166.8" width="2" height="1" fill="#d8d8e8"/>
<rect x="31.5" y="179.5" width="2" height="1" fill="#d8d8e8"/>
<rect x="31.5" y="192.1" width="2" height="1" fill="#d8d8e8"/>
<rect x="31.5" y="204.7" width="3" height="1" fill="#d8d8e8"/>
<rect x="31.5" y="217.3" width="2" height="1" fill="#d8d8e8"/>
<rect x="31.5" y="229.9" width="2" height="1" fill="#d8d8e8"/>
<rect x="31.5" y="242.6" width="2" height="1" fill="#d8d8e8"/>
<rect x="31.5" y="255.2" width="2" height="1" fill="#d8d8e8"/>
<rect x="31.5" y="267.8" width="3" height="1" fill="#d8d8e8"/>
<rect x="31.5" y="280.4" width="2" height="1" fill="#d8d8e8"/>
<rect x="31.5" y="293.0" width="2" height="1" fill="#d8d8e8"/>
<rect x="31.5" y="305.7" width="2" height="1" fill="#d8d8e8"/>
<rect x="31.5" y="318.3" width="2" height="1" fill="#d8d8e8"/>
<rect x="31.5" y="330.9" width="3" height="1" fill="#d8d8e8"/>
<rect x="31.5" y="343.5" width="2" height="1" fill="#d8d8e8"/>
<rect x="31.5" y="356.1" width="2" height="1" fill="#d8d8e8"/>
<rect x="31.5" y="368.8" width="2" height="1" fill="#d8d8e8"/>
<rect x="31.5" y="381.4" width="2" height="1" fill="#d8d8e8"/>
<rect x="31.5" y="394.0" width="3" height="1" fill="#d8d8e8"/>
<rect x="31.5" y="406.6" width="2" height="1" fill="#d8d8e8"/>
<rect x="31.5" y="419.2" width="2" height="1" fill="#d8d8e8"/>
<rect x="31.5" y="431.9" width="2" height="1" fill="#d8d8e8"/>
<rect x="31.5" y="444.5" width="2" height="1" fill="#d8d8e8"/>
<rect x="31.5" y="457.1" width="3" height="1" fill="#d8d8e8"/>
<rect x="31.5" y="469.7" width="2" height="1" fill="#d8d8e8"/>
<rect x="31.5" y="482.3" width="2" height="1" fill="#d8d8e8"/>
<rect x="31.5" y="495.0" width="2" height="1" fill="#d8d8e8"/>
<rect x="31.5" y="507.6" width="2" height="1" fill="#d8d8e8"/>
<rect x="31.5" y="520.2" width="3" height="1" fill="#d8d8e8"/>
<rect x="31.5" y="532.8" width="2" height="1" fill="#d8d8e8"/>
<rect x="31.5" y="545.4" width="2" height="1" fill="#d8d8e8"/>
<rect x="31.5" y="558.1" width="2" height="1" fill="#d8d8e8"/>
<rect x="31.5" y="570.7" width="2" height="1" fill="#d8d8e8"/>
<rect x="31.5" y="583.3" width="3" height="1" fill="#d8d8e8"/>
<rect x="31.5" y="595.9" width="2" height="1" fill="#d8d8e8"/>
<rect x="31.5" y="608.5" width="2" height="1" fill="#d8d8e8"/>
<rect x="31.5" y="621.2" width="2" height="1" fill="#d8d8e8"/>
<rect x="31.5" y="633.8" width="2" height="1" fill="#d8d8e8"/>
<rect x="31.5" y="646.4" width="3" height="1" fill="#d8d8e8"/>
<rect x="29.0" y="643" width="1" height="3" fill="#d0d0e0"/>
<rect x="62.7" y="644.5" width="1" height="1.5" fill="#d0d0e0"/>
<rect x="96.4" y="644.5" width="1" height="1.5" fill="#d0d0e0"/>
<rect x="130.2" y="644.5" width="1" height="1.5" fill="#d0d0e0"/>
<rect x="163.9" y="644.5" width="1" height="1.5" fill="#d0d0e0"/>
<rect x="197.6" y="643" width="1" height="3" fill="#d0d0e0"/>
<rect x="231.3" y="644.5" width="1" height="1.5" fill="#d0d0e0"/>
<rect x="265.0" y="644.5" width="1" height="1.5" fill="#d0d0e0"/>
<rect x="298.8" y="644.5" width="1" height="1.5" fill="#d0d0e0"/>
<rect x="332.5" y="644.5" width="1" height="1.5" fill="#d0d0e0"/>
<rect x="366.2" y="643" width="1" height="3" fill="#d0d0e0"/>
<rect x="399.9" y="644.5" width="1" height="1.5" fill="#d0d0e0"/>
<rect x="433.6" y="644.5" width="1" height="1.5" fill="#d0d0e0"/>
<rect x="467.4" y="644.5" width="1" height="1.5" fill="#d0d0e0"/>
<rect x="501.1" y="644.5" width="1" height="1.5" fill="#d0d0e0"/>
<rect x="534.8" y="643" width="1" height="3" fill="#d0d0e0"/>
<rect x="568.5" y="644.5" width="1" height="1.5" fill="#d0d0e0"/>
<rect x="602.2" y="644.5" width="1" height="1.5" fill="#d0d0e0"/>
<rect x="636.0" y="644.5" width="1" height="1.5" fill="#d0d0e0"/>
<rect x="669.7" y="644.5" width="1" height="1.5" fill="#d0d0e0"/>
<rect x="703.4" y="643" width="1" height="3" fill="#d0d0e0"/>
<rect x="737.1" y="644.5" width="1" height="1.5" fill="#d0d0e0"/>
<rect x="770.8" y="644.5" width="1" height="1.5" fill="#d0d0e0"/>
<rect x="804.6" y="644.5" width="1" height="1.5" fill="#d0d0e0"/>
<rect x="838.3" y="644.5" width="1" height="1.5" fill="#d0d0e0"/>
<rect x="872.0" y="643" width="1" height="3" fill="#d0d0e0"/>
<rect x="905.7" y="644.5" width="1" height="1.5" fill="#d0d0e0"/>
<rect x="939.4" y="644.5" width="1" height="1.5" fill="#d0d0e0"/>
<rect x="973.2" y="644.5" width="1" height="1.5" fill="#d0d0e0"/>
<rect x="1006.9" y="644.5" width="1" height="1.5" fill="#d0d0e0"/>
<rect x="1040.6" y="643" width="1" height="3" fill="#d0d0e0"/>
<rect x="1074.3" y="644.5" width="1" height="1.5" fill="#d0d0e0"/>
<rect x="1108.0" y="644.5" width="1" height="1.5" fill="#d0d0e0"/>
<text x="26.5" y="81.6" font-size="7.2" fill="#fff" text-anchor="end" font-family="Liberation Sans">90000</text>
<text x="26.5" y="144.7" font-size="7.2" fill="#fff" text-anchor="end" font-family="Liberation Sans">80000</text>
<text x="26.5" y="207.8" font-size="7.2" fill="#fff" text-anchor="end" font-family="Liberation Sans">70000</text>
<text x="26.5" y="270.9" font-size="7.2" fill="#fff" text-anchor="end" font-family="Liberation Sans">60000</text>
<text x="26.5" y="334.0" font-size="7.2" fill="#fff" text-anchor="end" font-family="Liberation Sans">50000</text>
<text x="26.5" y="397.1" font-size="7.2" fill="#fff" text-anchor="end" font-family="Liberation Sans">40000</text>
<text x="26.5" y="460.2" font-size="7.2" fill="#fff" text-anchor="end" font-family="Liberation Sans">30000</text>
<text x="26.5" y="523.3" font-size="7.2" fill="#fff" text-anchor="end" font-family="Liberation Sans">20000</text>
<text x="26.5" y="586.4" font-size="7.2" fill="#fff" text-anchor="end" font-family="Liberation Sans">10000</text>
<text x="26.5" y="649.5" font-size="7.2" fill="#fff" text-anchor="end" font-family="Liberation Sans">0</text>
<text x="29.5" y="655.5" font-size="7.2" fill="#fff" text-anchor="middle" font-family="Liberation Sans">0</text>
<text x="198.1" y="655.5" font-size="7.2" fill="#fff" text-anchor="middle" font-family="Liberation Sans">5000</text>
<text x="366.7" y="655.5" font-size="7.2" fill="#fff" text-anchor="middle" font-family="Liberation Sans">10000</text>
<text x="535.3" y="655.5" font-size="7.2" fill="#fff" text-anchor="middle" font-family="Liberation Sans">15000</text>
<text x="703.9" y="655.5" font-size="7.2" fill="#fff" text-anchor="middle" font-family="Liberation Sans">20000</text>
<text x="872.5" y="655.5" font-size="7.2" fill="#fff" text-anchor="middle" font-family="Liberation Sans">25000</text>
<text x="1041.1" y="655.5" font-size="7.2" fill="#fff" text-anchor="middle" font-family="Liberation Sans">30000</text>
</svg>
<svg class="a" style="left:1072px;top:75px" width="10" height="10" viewBox="0 0 10 10"><circle cx="5" cy="5" r="4.5" fill="#fff"/><circle cx="5" cy="5" r="2.2" fill="#222"/></svg>
<div class="t" style="left:1084px;top:76.3px;font-size:8px;color:#f4f4f4;-webkit-text-stroke:0">线性</div>
<svg class="a" style="left:1107.5px;top:75px" width="10" height="10" viewBox="0 0 10 10"><circle cx="5" cy="5" r="4.5" fill="#fff"/></svg>
<div class="t" style="left:1120px;top:76.3px;font-size:8px;color:#f4f4f4;-webkit-text-stroke:0">对数</div>
<div class="t" style="left:16px;top:662.5px;font-size:8.2px;color:#111;letter-spacing:-0.3px">道址<span class="m" style="font-size:6.75px;letter-spacing:0">: 614</span></div>
<div class="t" style="left:67px;top:662.5px;font-size:8.2px;color:#111;letter-spacing:-0.3px">能量<span class="m" style="font-size:6.75px;letter-spacing:0">: 63.57keV</span></div>
<div class="t" style="left:139px;top:662.5px;font-size:8.2px;color:#111;letter-spacing:-0.3px">计数<span class="m" style="font-size:6.75px;letter-spacing:0">: 38710</span></div>
<div class="t m" style="left:198px;top:662.5px;font-size:6.5px;color:#111">ROI: 601 ~ 626</div>
<div class="t" style="left:268px;top:662.5px;font-size:8.2px;color:#111;letter-spacing:-0.3px"><span class="m" style="font-size:6.75px;letter-spacing:0">ROI</span>计数<span class="m" style="font-size:6.75px;letter-spacing:0">: 436234</span></div>
<div class="t" style="left:5px;top:675px;font-size:8.4px;color:#111;letter-spacing:-0.2px">当前设备<span class="m" style="font-size:6.75px;letter-spacing:0">: </span>土壤标准源<span class="m" style="font-size:7.6px;letter-spacing:0">.Spe</span></div>
<div class="t" style="left:1153.5px;top:56px;font-size:8.4px;color:#333">测量信息</div>
<svg class="a" style="left:1241.5px;top:57px" width="6" height="6" viewBox="0 0 6 6"><rect x="0.5" y="1.8" width="3.7" height="3.7" fill="none" stroke="#222" stroke-width="1"/><path d="M1.8 1.8 V0.5 H5.5 V4.2 H4.2" fill="none" stroke="#222" stroke-width="1"/></svg>
<svg class="a" style="left:1256px;top:57px" width="6" height="6" viewBox="0 0 6 6"><path d="M0.5 0.5 L5.5 5.5 M5.5 0.5 L0.5 5.5" stroke="#222" stroke-width="1.1"/></svg>
<div class="a" style="left:1149px;top:71px;width:115.5px;height:89px;border:1px solid #a8a8a8;border-radius:5px"></div>
<div class="a" style="left:1156px;top:66px;width:40px;height:10px;background:#f0f0f0"></div>
<div class="t" style="left:1159.5px;top:67px;font-size:8.2px;color:#111;font-weight:bold">运行状态</div>
<div class="t" style="left:1153px;top:80.5px;font-size:7.9px;color:#1a1a1a">开始时间:</div>
<div class="t s" style="left:1200px;width:61.5px;text-align:right;top:81.5px;font-size:8px;color:#222">15:50:06</div>
<div class="t s" style="left:1200px;width:61.5px;text-align:right;top:98.5px;font-size:7.8px;color:#222">05/22/2024</div>
<div class="t" style="left:1153px;top:116px;font-size:7.9px;color:#1a1a1a">实时间:</div>
<div class="t s" style="left:1200px;width:61.5px;text-align:right;top:115.5px;font-size:8.2px;color:#222">62808.52</div>
<div class="t" style="left:1153px;top:133px;font-size:7.9px;color:#1a1a1a">活时间:</div>
<div class="t s" style="left:1200px;width:61.5px;text-align:right;top:132.5px;font-size:8.2px;color:#222">61707.65</div>
<div class="t" style="left:1153px;top:150px;font-size:7.9px;color:#1a1a1a">死时间:</div>
<div class="t s" style="left:1200px;width:61.5px;text-align:right;top:149.5px;font-size:8.2px;color:#222">1.75%</div>
<div class="a" style="left:300.5px;top:119px;width:643px;height:316px;background:#f0f0f0;border:1px solid #9a9a9a;box-shadow:0 2px 8px rgba(0,0,0,0.35)"></div>
<div class="a" style="left:301.5px;top:120px;width:641px;height:19.5px;background:#fff"></div>
<svg class="a" style="left:306px;top:124px" width="10" height="11" viewBox="0 0 10 11"><circle cx="5" cy="5.5" r="4.6" fill="#f7f7fb"/><circle cx="1.3" cy="3.6" r="0.9" fill="#40c080"/><circle cx="7.8" cy="2" r="0.9" fill="#7090b0"/><circle cx="5" cy="5.5" r="1.1" fill="#e8a0d0"/><circle cx="2.6" cy="5.6" r="1.6" fill="#243060"/><circle cx="7.4" cy="5.6" r="1.6" fill="#243060"/><circle cx="5.5" cy="9.6" r="0.9" fill="#f0b030"/></svg>
<div class="t" style="left:319.5px;top:125px;font-size:7.8px;color:#999;letter-spacing:-0.32px">效率刻度（土壤标准源.Spe）</div>
<div class="a" style="left:864.5px;top:128.5px;width:7.5px;height:1px;background:#777"></div>
<div class="a" style="left:894px;top:125px;width:7.5px;height:7.5px;border:1px solid #777"></div>
<svg class="a" style="left:924px;top:124.8px" width="8.5" height="8.5" viewBox="0 0 8.5 8.5"><path d="M0.3 0.3 L8.2 8.2 M8.2 0.3 L0.3 8.2" stroke="#777" stroke-width="0.9"/></svg>
<div class="a" style="left:308.3px;top:146px;width:311px;height:262px;background:#fff;border:1px solid #8c8c8c"></div>
<div class="a" style="left:458.5px;top:147px;width:1px;height:260px;background:#e4e4e4"></div>
<div class="a" style="left:0;top:0;width:1267px;height:683px;clip-path:inset(147px 658px 276px 309px)">
<div class="a" style="left:309px;top:182.7px;width:300px;height:1px;background:#e8e8e8"></div>
<div class="t" style="left:309px;width:149px;text-align:center;top:168.6px;font-size:8.4px;color:#222">63.5015</div>
<div class="t" style="left:459px;width:150px;text-align:center;top:168.6px;font-size:8.4px;color:#222">0.0118</div>
<div class="a" style="left:309px;top:202.5px;width:300px;height:1px;background:#e8e8e8"></div>
<div class="t" style="left:309px;width:149px;text-align:center;top:188.4px;font-size:8.4px;color:#222">129.204</div>
<div class="t" style="left:459px;width:150px;text-align:center;top:188.4px;font-size:8.4px;color:#222">0.0205</div>
<div class="a" style="left:309px;top:222.2px;width:300px;height:1px;background:#e8e8e8"></div>
<div class="t" style="left:309px;width:149px;text-align:center;top:208.1px;font-size:8.4px;color:#222">295.327</div>
<div class="t" style="left:459px;width:150px;text-align:center;top:208.1px;font-size:8.4px;color:#222">0.0238</div>
<div class="a" style="left:309px;top:242.0px;width:300px;height:1px;background:#e8e8e8"></div>
<div class="t" style="left:309px;width:149px;text-align:center;top:227.9px;font-size:8.4px;color:#222">338.394</div>
<div class="t" style="left:459px;width:150px;text-align:center;top:227.9px;font-size:8.4px;color:#222">0.0233</div>
<div class="a" style="left:309px;top:261.7px;width:300px;height:1px;background:#e8e8e8"></div>
<div class="t" style="left:309px;width:149px;text-align:center;top:247.6px;font-size:8.4px;color:#222">352.003</div>
<div class="t" style="left:459px;width:150px;text-align:center;top:247.6px;font-size:8.4px;color:#222">0.0231</div>
<div class="a" style="left:309px;top:281.5px;width:300px;height:1px;background:#e8e8e8"></div>
<div class="t" style="left:309px;width:149px;text-align:center;top:267.4px;font-size:8.4px;color:#222">409.506</div>
<div class="t" style="left:459px;width:150px;text-align:center;top:267.4px;font-size:8.4px;color:#222">0.0218</div>
<div class="a" style="left:309px;top:301.3px;width:300px;height:1px;background:#e8e8e8"></div>
<div class="t" style="left:309px;width:149px;text-align:center;top:287.2px;font-size:8.4px;color:#222">463.024</div>
<div class="t" style="left:459px;width:150px;text-align:center;top:287.2px;font-size:8.4px;color:#222">0.0206</div>
<div class="a" style="left:309px;top:321.0px;width:300px;height:1px;background:#e8e8e8"></div>
<div class="t" style="left:309px;width:149px;text-align:center;top:306.9px;font-size:8.4px;color:#222">661.623</div>
<div class="t" style="left:459px;width:150px;text-align:center;top:306.9px;font-size:8.4px;color:#222">0.0185</div>
<div class="a" style="left:309px;top:340.8px;width:300px;height:1px;background:#e8e8e8"></div>
<div class="t" style="left:309px;width:149px;text-align:center;top:326.7px;font-size:8.4px;color:#222">794.869</div>
<div class="t" style="left:459px;width:150px;text-align:center;top:326.7px;font-size:8.4px;color:#222">0.0172</div>
<div class="a" style="left:309px;top:360.5px;width:300px;height:1px;background:#e8e8e8"></div>
<div class="t" style="left:309px;width:149px;text-align:center;top:346.4px;font-size:8.4px;color:#222">911.128</div>
<div class="t" style="left:459px;width:150px;text-align:center;top:346.4px;font-size:8.4px;color:#222">0.0163</div>
<div class="a" style="left:309px;top:380.3px;width:300px;height:1px;background:#e8e8e8"></div>
<div class="t" style="left:309px;width:149px;text-align:center;top:366.2px;font-size:8.4px;color:#222">968.919</div>
<div class="t" style="left:459px;width:150px;text-align:center;top:366.2px;font-size:8.4px;color:#222">0.0159</div>
<div class="a" style="left:309px;top:400.1px;width:300px;height:1px;background:#e8e8e8"></div>
<div class="t" style="left:309px;width:149px;text-align:center;top:386.0px;font-size:8.4px;color:#222">1000.97</div>
<div class="t" style="left:459px;width:150px;text-align:center;top:386.0px;font-size:8.4px;color:#222">0.0153726</div>
<div class="a" style="left:309px;top:419.8px;width:300px;height:1px;background:#e8e8e8"></div>
<div class="t" style="left:309px;width:149px;text-align:center;top:405.7px;font-size:8.4px;color:#222">1120.29</div>
<div class="t" style="left:459px;width:150px;text-align:center;top:405.7px;font-size:8.4px;color:#222">0.011033</div>
</div>
<div class="t" style="left:309px;width:149px;text-align:center;top:151.5px;font-size:8.2px;color:#222">能量/keV</div>
<div class="t" style="left:459px;width:150px;text-align:center;top:151.5px;font-size:8.2px;color:#222">效率</div>
<div class="a" style="left:301.5px;top:408px;width:319px;height:5px;background:#f0f0f0"></div>
<div class="a" style="left:308.3px;top:407px;width:311px;height:1px;background:#8c8c8c"></div>
<div class="a" style="left:609px;top:147px;width:9.5px;height:260px;background:#f0f0f0"></div>
<div class="a" style="left:609.5px;top:158.5px;width:8.5px;height:140px;background:#cdcdcd"></div>
<svg class="a" style="left:611px;top:151px" width="6" height="4" viewBox="0 0 6 4"><path d="M0.5 3.5 L3 1 L5.5 3.5" fill="none" stroke="#555" stroke-width="1"/></svg>
<svg class="a" style="left:611px;top:400.5px" width="6" height="4" viewBox="0 0 6 4"><path d="M0.5 0.5 L3 3 L5.5 0.5" fill="none" stroke="#555" stroke-width="1"/></svg>
<div class="t" style="left:624px;top:146px;font-size:8.4px;color:#111">能量<span class="s" style="font-size:8px">(keV)</span></div>
<div class="a" style="left:624px;top:158.5px;width:312px;height:13px;background:#fff;border:1px solid #7a7a7a;border-right-color:#bbb;border-bottom-color:#bbb"></div>
<div class="t m" style="left:625.5px;top:162px;font-size:7.2px;color:#555">63.5658</div>
<div class="a" style="left:624px;top:188px;width:259px;height:13px;background:#fff;border:1px solid #7a7a7a;border-right-color:#bbb;border-bottom-color:#bbb"></div>
<div class="a" style="left:887px;top:188px;width:48.5px;height:13.5px;background:#e1e1e1;border:1px solid #adadad"></div><div class="t" style="left:887px;width:48.5px;text-align:center;top:190.3px;font-size:8.2px;color:#111">自动计算</div>
<div class="a" style="left:884px;top:207.3px;width:51.5px;height:13.399999999999977px;background:#cccccc;border:1px solid #cccccc"></div><div class="t" style="left:884px;width:51.5px;text-align:center;top:209.6px;font-size:8.2px;color:#9a9a9a">读取效率刻度</div>
<div class="a" style="left:884px;top:225.8px;width:51.5px;height:13.699999999999989px;background:#e1e1e1;border:1px solid #adadad"></div><div class="t" style="left:884px;width:51.5px;text-align:center;top:228.2px;font-size:8.2px;color:#111">保存效率刻度</div>
<div class="a" style="left:624.5px;top:244.5px;width:311.5px;height:183px;border:1px solid #6fa86f;border-radius:5px"></div>
<svg class="a" style="left:0;top:0" width="1267" height="683" viewBox="0 0 1267 683">
<line x1="711.4" y1="252" x2="711.4" y2="403" stroke="#d4d4d4" stroke-width="0.8" stroke-dasharray="1.5 1.5"/>
<line x1="754.3" y1="252" x2="754.3" y2="403" stroke="#d4d4d4" stroke-width="0.8" stroke-dasharray="1.5 1.5"/>
<line x1="797.1" y1="252" x2="797.1" y2="403" stroke="#d4d4d4" stroke-width="0.8" stroke-dasharray="1.5 1.5"/>
<line x1="840.0" y1="252" x2="840.0" y2="403" stroke="#d4d4d4" stroke-width="0.8" stroke-dasharray="1.5 1.5"/>
<line x1="882.9" y1="252" x2="882.9" y2="403" stroke="#d4d4d4" stroke-width="0.8" stroke-dasharray="1.5 1.5"/>
<line x1="925.8" y1="252" x2="925.8" y2="403" stroke="#d4d4d4" stroke-width="0.8" stroke-dasharray="1.5 1.5"/>
<line x1="669" y1="253.6" x2="926" y2="253.6" stroke="#d4d4d4" stroke-width="0.8" stroke-dasharray="1.5 1.5"/>
<line x1="669" y1="283.2" x2="926" y2="283.2" stroke="#d4d4d4" stroke-width="0.8" stroke-dasharray="1.5 1.5"/>
<line x1="669" y1="312.8" x2="926" y2="312.8" stroke="#d4d4d4" stroke-width="0.8" stroke-dasharray="1.5 1.5"/>
<line x1="669" y1="342.4" x2="926" y2="342.4" stroke="#d4d4d4" stroke-width="0.8" stroke-dasharray="1.5 1.5"/>
<line x1="669" y1="372.0" x2="926" y2="372.0" stroke="#d4d4d4" stroke-width="0.8" stroke-dasharray="1.5 1.5"/>
<line x1="669" y1="401.6" x2="926" y2="401.6" stroke="#d4d4d4" stroke-width="0.8" stroke-dasharray="1.5 1.5"/>
<line x1="668.5" y1="252" x2="668.5" y2="404" stroke="#333" stroke-width="1"/>
<line x1="668" y1="403.8" x2="926" y2="403.8" stroke="#333" stroke-width="1"/>
<line x1="668.5" y1="403.8" x2="668.5" y2="400.8" stroke="#333" stroke-width="0.8"/>
<line x1="677.1" y1="403.8" x2="677.1" y2="402.0" stroke="#333" stroke-width="0.8"/>
<line x1="685.7" y1="403.8" x2="685.7" y2="402.0" stroke="#333" stroke-width="0.8"/>
<line x1="694.2" y1="403.8" x2="694.2" y2="402.0" stroke="#333" stroke-width="0.8"/>
<line x1="702.8" y1="403.8" x2="702.8" y2="402.0" stroke="#333" stroke-width="0.8"/>
<line x1="711.4" y1="403.8" x2="711.4" y2="400.8" stroke="#333" stroke-width="0.8"/>
<line x1="720.0" y1="403.8" x2="720.0" y2="402.0" stroke="#333" stroke-width="0.8"/>
<line x1="728.5" y1="403.8" x2="728.5" y2="402.0" stroke="#333" stroke-width="0.8"/>
<line x1="737.1" y1="403.8" x2="737.1" y2="402.0" stroke="#333" stroke-width="0.8"/>
<line x1="745.7" y1="403.8" x2="745.7" y2="402.0" stroke="#333" stroke-width="0.8"/>
<line x1="754.3" y1="403.8" x2="754.3" y2="400.8" stroke="#333" stroke-width="0.8"/>
<line x1="762.8" y1="403.8" x2="762.8" y2="402.0" stroke="#333" stroke-width="0.8"/>
<line x1="771.4" y1="403.8" x2="771.4" y2="402.0" stroke="#333" stroke-width="0.8"/>
<line x1="780.0" y1="403.8" x2="780.0" y2="402.0" stroke="#333" stroke-width="0.8"/>
<line x1="788.6" y1="403.8" x2="788.6" y2="402.0" stroke="#333" stroke-width="0.8"/>
<line x1="797.1" y1="403.8" x2="797.1" y2="400.8" stroke="#333" stroke-width="0.8"/>
<line x1="805.7" y1="403.8" x2="805.7" y2="402.0" stroke="#333" stroke-width="0.8"/>
<line x1="814.3" y1="403.8" x2="814.3" y2="402.0" stroke="#333" stroke-width="0.8"/>
<line x1="822.9" y1="403.8" x2="822.9" y2="402.0" stroke="#333" stroke-width="0.8"/>
<line x1="831.4" y1="403.8" x2="831.4" y2="402.0" stroke="#333" stroke-width="0.8"/>
<line x1="840.0" y1="403.8" x2="840.0" y2="400.8" stroke="#333" stroke-width="0.8"/>
<line x1="848.6" y1="403.8" x2="848.6" y2="402.0" stroke="#333" stroke-width="0.8"/>
<line x1="857.2" y1="403.8" x2="857.2" y2="402.0" stroke="#333" stroke-width="0.8"/>
<line x1="865.7" y1="403.8" x2="865.7" y2="402.0" stroke="#333" stroke-width="0.8"/>
<line x1="874.3" y1="403.8" x2="874.3" y2="402.0" stroke="#333" stroke-width="0.8"/>
<line x1="882.9" y1="403.8" x2="882.9" y2="400.8" stroke="#333" stroke-width="0.8"/>
<line x1="891.5" y1="403.8" x2="891.5" y2="402.0" stroke="#333" stroke-width="0.8"/>
<line x1="900.1" y1="403.8" x2="900.1" y2="402.0" stroke="#333" stroke-width="0.8"/>
<line x1="908.6" y1="403.8" x2="908.6" y2="402.0" stroke="#333" stroke-width="0.8"/>
<line x1="917.2" y1="403.8" x2="917.2" y2="402.0" stroke="#333" stroke-width="0.8"/>
<line x1="925.8" y1="403.8" x2="925.8" y2="400.8" stroke="#333" stroke-width="0.8"/>
<text x="668.5" y="412.8" font-size="7.8" fill="#222" text-anchor="middle" font-family="Liberation Sans">0</text>
<text x="711.4" y="412.8" font-size="7.8" fill="#222" text-anchor="middle" font-family="Liberation Sans">500</text>
<text x="754.3" y="412.8" font-size="7.8" fill="#222" text-anchor="middle" font-family="Liberation Sans">1000</text>
<text x="797.1" y="412.8" font-size="7.8" fill="#222" text-anchor="middle" font-family="Liberation Sans">1500</text>
<text x="840.0" y="412.8" font-size="7.8" fill="#222" text-anchor="middle" font-family="Liberation Sans">2000</text>
<text x="882.9" y="412.8" font-size="7.8" fill="#222" text-anchor="middle" font-family="Liberation Sans">2500</text>
<text x="925.8" y="412.8" font-size="7.8" fill="#222" text-anchor="middle" font-family="Liberation Sans">3000</text>
<text x="664" y="407" font-size="7.8" fill="#222" text-anchor="end" font-family="Liberation Sans">0</text>
<path d="M668.5 404.0 L669.4 346.7 L670.2 250.0 L671.1 250.0 L671.9 250.0 L672.8 250.0 L673.6 250.0 L674.5 253.3 L675.4 256.7 L676.2 260.0 L677.1 263.3 L677.9 266.7 L678.8 270.0 L679.6 273.3 L680.5 276.7 L681.4 280.0 L682.2 281.6 L683.1 283.2 L683.9 284.8 L684.8 286.4 L685.7 288.0 L686.5 289.6 L687.4 291.2 L688.2 292.8 L689.1 294.4 L689.9 296.0 L690.8 297.6 L691.7 299.2 L692.5 300.8 L693.4 302.4 L694.2 304.0 L695.1 305.6 L695.9 307.2 L696.8 308.8 L697.7 310.4 L698.5 312.0 L699.4 313.6 L700.2 315.2 L701.1 316.8 L701.9 318.4 L702.8 320.0 L703.7 320.8 L704.5 321.6 L705.4 322.4 L706.2 323.2 L707.1 324.0 L707.9 324.8 L708.8 325.6 L709.7 326.4 L710.5 327.2 L711.4 328.0 L712.2 328.8 L713.1 329.6 L714.0 330.4 L714.8 331.2 L715.7 332.0 L716.5 332.8 L717.4 333.6 L718.2 334.4 L719.1 335.2 L720.0 336.0 L720.8 336.8 L721.7 337.6 L722.5 338.4 L723.4 339.2 L724.2 340.0 L725.1 340.8 L726.0 341.6 L726.8 342.4 L727.7 343.2 L728.5 344.0 L729.4 344.8 L730.2 345.6 L731.1 346.4 L732.0 347.2 L732.8 348.0 L733.7 348.8 L734.5 349.6 L735.4 350.4 L736.3 351.2 L737.1 352.0 L738.0 352.4 L738.8 352.9 L739.7 353.4 L740.5 353.8 L741.4 354.2 L742.3 354.7 L743.1 355.1 L744.0 355.6 L744.8 356.1 L745.7 356.5 L746.5 356.9 L747.4 357.4 L748.3 357.9 L749.1 358.3 L750.0 358.8 L750.8 359.2 L751.7 359.6 L752.5 360.1 L753.4 360.6 L754.3 361.0 L755.1 361.4 L756.0 361.9 L756.8 362.4 L757.7 362.8 L758.5 363.2 L759.4 363.7 L760.3 364.1 L761.1 364.6 L762.0 365.1 L762.8 365.5 L763.7 365.9 L764.6 366.4 L765.4 366.9 L766.3 367.3 L767.1 367.8 L768.0 368.2 L768.8 368.6 L769.7 369.1 L770.6 369.6 L771.4 370.0 L772.3 370.2 L773.1 370.5 L774.0 370.7 L774.8 370.9 L775.7 371.2 L776.6 371.4 L777.4 371.7 L778.3 371.9 L779.1 372.1 L780.0 372.4 L780.8 372.6 L781.7 372.8 L782.6 373.1 L783.4 373.3 L784.3 373.6 L785.1 373.8 L786.0 374.0 L786.8 374.3 L787.7 374.5 L788.6 374.7 L789.4 375.0 L790.3 375.2 L791.1 375.4 L792.0 375.7 L792.9 375.9 L793.7 376.2 L794.6 376.4 L795.4 376.6 L796.3 376.9 L797.1 377.1 L798.0 377.3 L798.9 377.6 L799.7 377.8 L800.6 378.1 L801.4 378.3 L802.3 378.5 L803.1 378.8 L804.0 379.0 L804.9 379.2 L805.7 379.5 L806.6 379.7 L807.4 379.9 L808.3 380.2 L809.1 380.4 L810.0 380.7 L810.9 380.9 L811.7 381.1 L812.6 381.4 L813.4 381.6 L814.3 381.8 L815.1 382.1 L816.0 382.3 L816.9 382.6 L817.7 382.8 L818.6 383.0 L819.4 383.3 L820.3 383.5 L821.2 383.7 L822.0 383.8 L822.9 384.0 L823.7 384.2 L824.6 384.4 L825.4 384.5 L826.3 384.7 L827.2 384.9 L828.0 385.1 L828.9 385.2 L829.7 385.4 L830.6 385.6 L831.4 385.8 L832.3 385.9 L833.2 386.1 L834.0 386.3 L834.9 386.5 L835.7 386.6 L836.6 386.8 L837.4 387.0 L838.3 387.2 L839.2 387.3 L840.0 387.5 L840.9 387.7 L841.7 387.9 L842.6 388.0 L843.5 388.2 L844.3 388.4 L845.2 388.6 L846.0 388.7 L846.9 388.9 L847.7 389.1 L848.6 389.3 L849.5 389.4 L850.3 389.6 L851.2 389.8 L852.0 390.0 L852.9 390.1 L853.7 390.3 L854.6 390.5 L855.5 390.7 L856.3 390.8 L857.2 391.0 L858.0 391.1 L858.9 391.2 L859.7 391.4 L860.6 391.5 L861.5 391.6 L862.3 391.8 L863.2 391.9 L864.0 392.0 L864.9 392.1 L865.7 392.2 L866.6 392.4 L867.5 392.5 L868.3 392.6 L869.2 392.8 L870.0 392.9 L870.9 393.0 L871.8 393.1 L872.6 393.2 L873.5 393.4 L874.3 393.5 L875.2 393.6 L876.0 393.8 L876.9 393.9 L877.8 394.0 L878.6 394.1 L879.5 394.2 L880.3 394.4 L881.2 394.5 L882.0 394.6 L882.9 394.8 L883.8 394.9 L884.6 395.0 L885.5 395.1 L886.3 395.2 L887.2 395.4 L888.0 395.5 L888.9 395.6 L889.8 395.8 L890.6 395.9 L891.5 396.0 L892.3 396.1 L893.2 396.1 L894.0 396.2 L894.9 396.3 L895.8 396.4 L896.6 396.4 L897.5 396.5 L898.3 396.6 L899.2 396.7 L900.1 396.8 L900.9 396.8 L901.8 396.9 L902.6 397.0 L903.5 397.1 L904.3 397.1 L905.2 397.2 L906.1 397.3 L906.9 397.4 L907.8 397.4 L908.6 397.5 L909.5 397.6 L910.3 397.6 L911.2 397.7 L912.1 397.8 L912.9 397.9 L913.8 397.9 L914.6 398.0 L915.5 398.1 L916.3 398.2 L917.2 398.2 L918.1 398.3 L918.9 398.4 L919.8 398.5 L920.6 398.6 L921.5 398.6 L922.3 398.7 L923.2 398.8 L924.1 398.9 L924.9 398.9 L925.8 399.0" fill="none" stroke="#4a4ad0" stroke-width="1"/>
<circle cx="820.5" cy="373.5" r="1.4" fill="#e02020"/>
<circle cx="893" cy="397" r="1.4" fill="#e02020"/>
<text x="796.7" y="423.5" font-size="8.6" fill="#2f8fd0" text-anchor="middle" font-weight="bold" font-family="Liberation Sans">能量/keV</text>
</svg>
<div class="a" style="left:308.3px;top:413.6px;width:56px;height:12.8px;background:#e9e9e9;border:1px solid #c2c2c2"></div>
<div class="t" style="left:310.5px;top:415.5px;font-size:8.6px;color:#111">经验公式</div>
<svg class="a" style="left:355px;top:418.5px" width="7" height="4" viewBox="0 0 7 4"><path d="M0.5 0.5 L3.5 3.5 L6.5 0.5" fill="none" stroke="#444" stroke-width="0.9"/></svg>
<div class="a" style="left:369.5px;top:413.6px;width:47.69999999999999px;height:13.399999999999977px;background:#cccccc;border:1px solid #cccccc"></div><div class="t" style="left:369.5px;width:47.69999999999999px;text-align:center;top:415.8px;font-size:8.4px;color:#9a9a9a">拟合</div>
<div class="a" style="left:471px;top:413.6px;width:47.700000000000045px;height:13.399999999999977px;background:#cccccc;border:1px solid #cccccc"></div><div class="t" style="left:471px;width:47.700000000000045px;text-align:center;top:415.8px;font-size:8.4px;color:#9a9a9a">导入</div>
<div class="a" style="left:571.6px;top:413.5px;width:47.799999999999955px;height:13.5px;background:#e1e1e1;border:1px solid #adadad"></div><div class="t" style="left:571.6px;width:47.799999999999955px;text-align:center;top:415.8px;font-size:8.4px;color:#111">自动刻度</div>
<div class="a" style="left:424px;top:168.4px;width:395.5px;height:217.5px;background:#f0f0f0;border:1px solid #a8a8a8;box-shadow:0 3px 10px rgba(0,0,0,0.3)"></div>
<div class="a" style="left:425px;top:169.4px;width:393.5px;height:19.5px;background:#fff"></div>
<svg class="a" style="left:430px;top:173px" width="10" height="11" viewBox="0 0 10 11"><circle cx="5" cy="5.5" r="4.6" fill="#f7f7fb"/><circle cx="1.3" cy="3.6" r="0.9" fill="#40c080"/><circle cx="7.8" cy="2" r="0.9" fill="#7090b0"/><circle cx="5" cy="5.5" r="1.1" fill="#e8a0d0"/><circle cx="2.6" cy="5.6" r="1.6" fill="#243060"/><circle cx="7.4" cy="5.6" r="1.6" fill="#243060"/><circle cx="5.5" cy="9.6" r="0.9" fill="#f0b030"/></svg>
<div class="t" style="left:444px;top:174px;font-size:7.8px;color:#999;letter-spacing:-0.32px">自动效率刻度（土壤标准源.Spe）</div>
<div class="a" style="left:740.5px;top:178px;width:8px;height:1px;background:#777"></div>
<div class="a" style="left:770.5px;top:174.5px;width:7px;height:7px;border:1px solid #d0d0d0"></div>
<svg class="a" style="left:800px;top:174px" width="8.5" height="8.5" viewBox="0 0 8.5 8.5"><path d="M0.3 0.3 L8.2 8.2 M8.2 0.3 L0.3 8.2" stroke="#777" stroke-width="0.9"/></svg>
<div class="t" style="left:424px;width:396px;text-align:center;top:194.5px;font-size:14px;color:#111;font-weight:bold;font-family:'Liberation Serif',serif;letter-spacing:0.5px">校准信息</div>
<div class="a" style="left:432.3px;top:213.5px;width:380px;height:146px;background:#fff;border:1px solid #8c8c8c"></div>
<div class="a" style="left:558.2px;top:214.5px;width:1px;height:134.5px;background:#e4e4e4"></div>
<div class="a" style="left:684.4px;top:214.5px;width:1px;height:134.5px;background:#e4e4e4"></div>
<div class="t" style="left:433px;width:125px;text-align:center;top:219px;font-size:8.2px;color:#222">核素</div>
<div class="t" style="left:559px;width:125px;text-align:center;top:218.5px;font-size:8.2px;color:#222">标定活度/Bq</div>
<div class="t" style="left:685px;width:127px;text-align:center;top:218.5px;font-size:8.2px;color:#222">标定日期</div>
<div class="a" style="left:433px;top:249.2px;width:378px;height:1px;background:#e8e8e8"></div>
<div class="t" style="left:433px;width:125px;text-align:center;top:235.7px;font-size:8.4px;color:#222">Cs-137</div>
<div class="t" style="left:559px;width:125px;text-align:center;top:235.7px;font-size:8.4px;color:#222">7800</div>
<div class="t" style="left:685px;width:125px;text-align:center;top:235.7px;font-size:8.4px;color:#222">2023-8-1</div>
<div class="a" style="left:433px;top:269.0px;width:378px;height:1px;background:#e8e8e8"></div>
<div class="t" style="left:433px;width:125px;text-align:center;top:255.5px;font-size:8.4px;color:#222">Co-60</div>
<div class="t" style="left:559px;width:125px;text-align:center;top:255.5px;font-size:8.4px;color:#222">2430</div>
<div class="t" style="left:685px;width:125px;text-align:center;top:255.5px;font-size:8.4px;color:#222">2023-8-1</div>
<div class="a" style="left:433px;top:288.7px;width:378px;height:1px;background:#e8e8e8"></div>
<div class="t" style="left:433px;width:125px;text-align:center;top:275.2px;font-size:8.4px;color:#222">Ra-226链</div>
<div class="t" style="left:559px;width:125px;text-align:center;top:275.2px;font-size:8.4px;color:#222">3640</div>
<div class="t" style="left:685px;width:125px;text-align:center;top:275.2px;font-size:8.4px;color:#222">2023-8-1</div>
<div class="a" style="left:433px;top:308.5px;width:378px;height:1px;background:#e8e8e8"></div>
<div class="t" style="left:433px;width:125px;text-align:center;top:295.0px;font-size:8.4px;color:#222">Th-232链</div>
<div class="t" style="left:559px;width:125px;text-align:center;top:295.0px;font-size:8.4px;color:#222">1860</div>
<div class="t" style="left:685px;width:125px;text-align:center;top:295.0px;font-size:8.4px;color:#222">2023-8-1</div>
<div class="a" style="left:433px;top:328.2px;width:378px;height:1px;background:#e8e8e8"></div>
<div class="t" style="left:433px;width:125px;text-align:center;top:314.7px;font-size:8.4px;color:#222">U-238链</div>
<div class="t" style="left:559px;width:125px;text-align:center;top:314.7px;font-size:8.4px;color:#222">2512</div>
<div class="t" style="left:685px;width:125px;text-align:center;top:314.7px;font-size:8.4px;color:#222">2023-8-1</div>
<div class="a" style="left:433px;top:348.0px;width:378px;height:1px;background:#e8e8e8"></div>
<div class="t" style="left:433px;width:125px;text-align:center;top:334.5px;font-size:8.4px;color:#222">K-40</div>
<div class="t" style="left:559px;width:125px;text-align:center;top:334.5px;font-size:8.4px;color:#222">939</div>
<div class="t" style="left:685px;width:125px;text-align:center;top:334.5px;font-size:8.4px;color:#222">2023-8-1</div>
<div class="a" style="left:432.6px;top:364px;width:48.0px;height:13.600000000000023px;background:#cccccc;border:1px solid #cccccc"></div><div class="t" style="left:432.6px;width:48.0px;text-align:center;top:366.3px;font-size:8.4px;color:#9a9a9a">添加</div>
<div class="a" style="left:485.9px;top:364px;width:48.30000000000007px;height:13.600000000000023px;background:#cccccc;border:1px solid #cccccc"></div><div class="t" style="left:485.9px;width:48.30000000000007px;text-align:center;top:366.3px;font-size:8.4px;color:#9a9a9a">移除</div>
<div class="a" style="left:625px;top:364px;width:47.60000000000002px;height:13.600000000000023px;background:#cccccc;border:1px solid #cccccc"></div><div class="t" style="left:625px;width:47.60000000000002px;text-align:center;top:366.3px;font-size:8.4px;color:#9a9a9a">导入</div>
<div class="a" style="left:763.4px;top:364px;width:48.10000000000002px;height:13.600000000000023px;background:#cccccc;border:1px solid #cccccc"></div><div class="t" style="left:763.4px;width:48.10000000000002px;text-align:center;top:366.3px;font-size:8.4px;color:#9a9a9a">开始刻度</div>
<div class="a" style="left:563.3px;top:236px;width:112px;height:79px;background:#fff;border:1px solid #8a8a8a;box-shadow:1px 2px 6px rgba(0,0,0,0.35)"></div>
<div class="a" style="left:564.3px;top:285px;width:110px;height:29px;background:#f0f0f0"></div>
<svg class="a" style="left:566px;top:239.5px" width="10" height="11" viewBox="0 0 10 11"><circle cx="5" cy="5.5" r="4.6" fill="#f7f7fb"/><circle cx="1.3" cy="3.6" r="0.9" fill="#40c080"/><circle cx="7.8" cy="2" r="0.9" fill="#7090b0"/><circle cx="5" cy="5.5" r="1.1" fill="#e8a0d0"/><circle cx="2.6" cy="5.6" r="1.6" fill="#243060"/><circle cx="7.4" cy="5.6" r="1.6" fill="#243060"/><circle cx="5.5" cy="9.6" r="0.9" fill="#f0b030"/></svg>
<div class="t" style="left:579.5px;top:240px;font-size:8.8px;color:#000">提示</div>
<svg class="a" style="left:661.5px;top:241.3px" width="7" height="7" viewBox="0 0 7 7"><path d="M0.3 0.3 L6.7 6.7 M6.7 0.3 L0.3 6.7" stroke="#222" stroke-width="0.9"/></svg>
<svg class="a" style="left:571px;top:260.5px" width="21" height="21" viewBox="0 0 21 21"><circle cx="10.5" cy="10.5" r="10" fill="#0a64c8"/><rect x="9.8" y="8.5" width="1.4" height="8" fill="#fff"/><circle cx="10.5" cy="5.8" r="0.9" fill="#fff"/></svg>
<div class="t" style="left:604px;top:262px;font-size:7.9px;color:#333">自动效率刻度完成</div>
<div class="a" style="left:618.7px;top:291.5px;width:48px;height:15.3px;background:#e5f1fb;border:1px solid #2a88d8"></div>
<div class="t" style="left:618.7px;width:48px;text-align:center;top:295px;font-size:8.4px;color:#111">确定</div>
<svg class="a" style="left:641px;top:296px" width="8" height="12" viewBox="0 0 8 12"><path d="M0.5 0.5 V10 L2.8 7.8 L4.5 11.3 L5.8 10.7 L4.2 7.3 L7.2 7.3 Z" fill="#fff" stroke="#222" stroke-width="0.7"/></svg>
<div class="a" style="left:0;top:0;width:1267px;height:683px;clip-path:inset(0 122px 0 0)">
<div class="t" style="left:1076px;top:626px;font-size:13.9px;color:rgba(235,235,255,0.5);-webkit-text-stroke:0">激活 Windows</div>
<div class="t" style="left:1076px;top:643px;font-size:9.5px;color:rgba(235,235,255,0.5);-webkit-text-stroke:0">转到“设置”以激活 Windows。</div>
</div>
<div class="a" style="left:0;top:0;width:1267px;height:683px;clip-path:inset(0 0 0 1145px)">
<div class="t" style="left:1076px;top:626px;font-size:13.9px;color:#bdbdbd;-webkit-text-stroke:0">激活 Windows</div>
<div class="t" style="left:1076px;top:643px;font-size:9.5px;color:#c4c4c4;-webkit-text-stroke:0">转到“设置”以激活 Windows。</div>
</div>
<div class="a" style="left:1192px;top:651px;width:23px;height:23px;border-radius:50%;background:radial-gradient(circle at 60% 35%,#7cc4ff,#3d8ff0 75%);box-shadow:0 0 2px rgba(0,0,0,0.2)"></div>
<div class="t" style="left:1192px;width:23px;text-align:center;top:659px;font-size:7px;color:#fff">05:19</div>
<div class="a" style="left:1226px;top:646px;width:41px;height:37px;background:#1c1c1c"></div>
<div class="a" style="left:1255px;top:646px;width:12px;height:37px;background:#3a3a3a"></div>
<div class="a" style="left:1231px;top:657px;width:20px;height:20px;background:#2c2c2c;border-radius:4px"></div>
<svg class="a" style="left:1235px;top:661px" width="12" height="12" viewBox="0 0 12 12"><path d="M1 1 L11 11 M1 11 L11 1 M1 1 V11 M11 1 V11" stroke="#555" stroke-width="1.3" fill="none"/></svg>
<div class="a" style="left:1260px;top:663px;width:2px;height:2px;background:#a07050"></div>
<div class="a" style="left:1260px;top:666.5px;width:2px;height:2px;background:#a07050"></div>
<div class="a" style="left:1260px;top:670px;width:2px;height:2px;background:#a07050"></div>

</body></html>
